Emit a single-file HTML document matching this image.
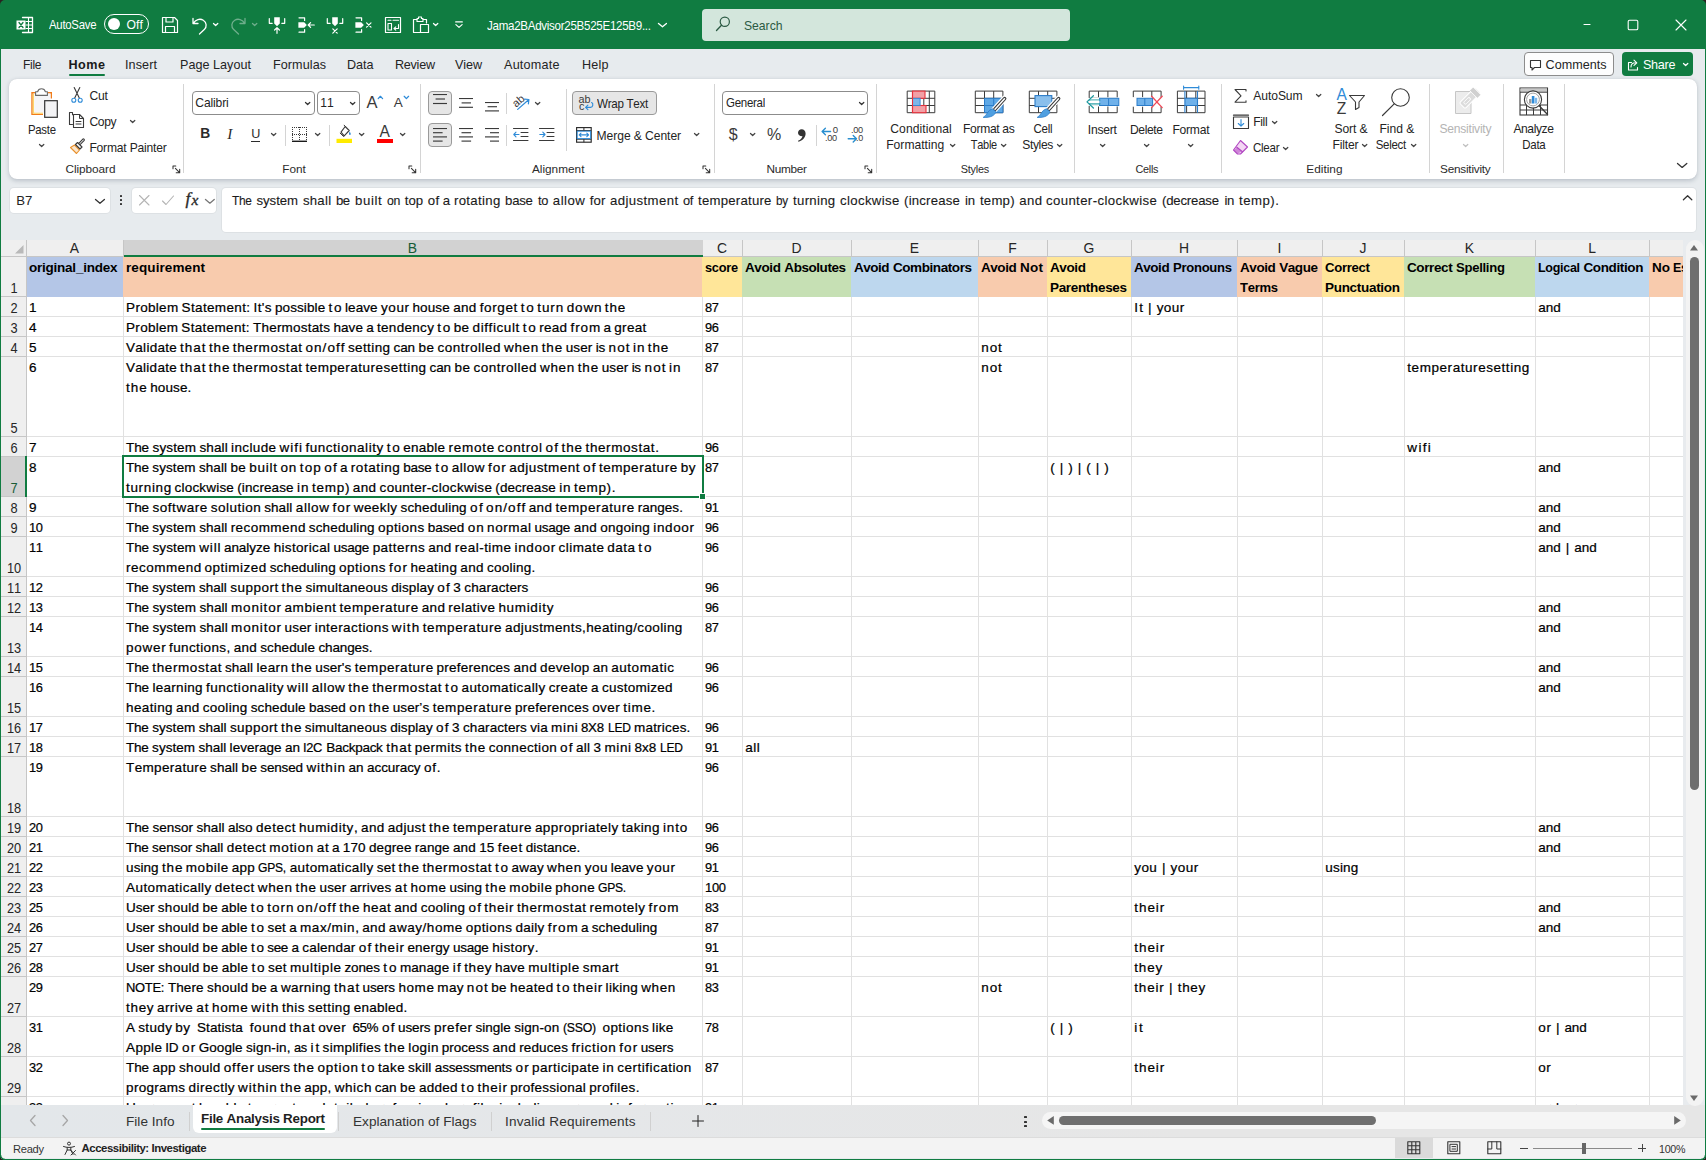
<!DOCTYPE html>
<html><head><meta charset="utf-8"><title>Excel</title><style>
html,body{margin:0;padding:0;}
body{width:1706px;height:1160px;position:relative;overflow:hidden;background:#e7ebee;font-family:"Liberation Sans",sans-serif;font-kerning:none;}
div,svg{position:absolute;box-sizing:border-box;}
.t{white-space:pre;}
.w{position:absolute;top:0;}
</style></head><body>
<div style="left:1px;top:240px;width:1682px;height:865px;background:#ffffff;"></div>
<div style="left:1px;top:240px;width:1682px;height:17px;background:#efefef;"></div>
<div style="left:1px;top:256px;width:1682px;height:1px;background:#c6c6c6;"></div>
<div style="left:1px;top:257px;width:26px;height:848px;background:#efefef;"></div>
<div style="left:26px;top:240px;width:1px;height:865px;background:#c6c6c6;"></div>
<svg style="left:13px;top:243px;" width="12" height="12" viewBox="0 0 12 12"><path d="M10.5 2 L10.5 10.5 L2 10.5 Z" fill="#b9b9b9"/></svg>
<div style="left:27px;top:296px;width:1656px;height:1px;background:#e1e1e1;"></div>
<div style="left:1px;top:296px;width:25px;height:1px;background:#c6c6c6;"></div>
<div style="left:27px;top:316px;width:1656px;height:1px;background:#e1e1e1;"></div>
<div style="left:1px;top:316px;width:25px;height:1px;background:#c6c6c6;"></div>
<div style="left:27px;top:336px;width:1656px;height:1px;background:#e1e1e1;"></div>
<div style="left:1px;top:336px;width:25px;height:1px;background:#c6c6c6;"></div>
<div style="left:27px;top:356px;width:1656px;height:1px;background:#e1e1e1;"></div>
<div style="left:1px;top:356px;width:25px;height:1px;background:#c6c6c6;"></div>
<div style="left:27px;top:436px;width:1656px;height:1px;background:#e1e1e1;"></div>
<div style="left:1px;top:436px;width:25px;height:1px;background:#c6c6c6;"></div>
<div style="left:27px;top:456px;width:1656px;height:1px;background:#e1e1e1;"></div>
<div style="left:1px;top:456px;width:25px;height:1px;background:#c6c6c6;"></div>
<div style="left:27px;top:496px;width:1656px;height:1px;background:#e1e1e1;"></div>
<div style="left:1px;top:496px;width:25px;height:1px;background:#c6c6c6;"></div>
<div style="left:27px;top:516px;width:1656px;height:1px;background:#e1e1e1;"></div>
<div style="left:1px;top:516px;width:25px;height:1px;background:#c6c6c6;"></div>
<div style="left:27px;top:536px;width:1656px;height:1px;background:#e1e1e1;"></div>
<div style="left:1px;top:536px;width:25px;height:1px;background:#c6c6c6;"></div>
<div style="left:27px;top:576px;width:1656px;height:1px;background:#e1e1e1;"></div>
<div style="left:1px;top:576px;width:25px;height:1px;background:#c6c6c6;"></div>
<div style="left:27px;top:596px;width:1656px;height:1px;background:#e1e1e1;"></div>
<div style="left:1px;top:596px;width:25px;height:1px;background:#c6c6c6;"></div>
<div style="left:27px;top:616px;width:1656px;height:1px;background:#e1e1e1;"></div>
<div style="left:1px;top:616px;width:25px;height:1px;background:#c6c6c6;"></div>
<div style="left:27px;top:656px;width:1656px;height:1px;background:#e1e1e1;"></div>
<div style="left:1px;top:656px;width:25px;height:1px;background:#c6c6c6;"></div>
<div style="left:27px;top:676px;width:1656px;height:1px;background:#e1e1e1;"></div>
<div style="left:1px;top:676px;width:25px;height:1px;background:#c6c6c6;"></div>
<div style="left:27px;top:716px;width:1656px;height:1px;background:#e1e1e1;"></div>
<div style="left:1px;top:716px;width:25px;height:1px;background:#c6c6c6;"></div>
<div style="left:27px;top:736px;width:1656px;height:1px;background:#e1e1e1;"></div>
<div style="left:1px;top:736px;width:25px;height:1px;background:#c6c6c6;"></div>
<div style="left:27px;top:756px;width:1656px;height:1px;background:#e1e1e1;"></div>
<div style="left:1px;top:756px;width:25px;height:1px;background:#c6c6c6;"></div>
<div style="left:27px;top:816px;width:1656px;height:1px;background:#e1e1e1;"></div>
<div style="left:1px;top:816px;width:25px;height:1px;background:#c6c6c6;"></div>
<div style="left:27px;top:836px;width:1656px;height:1px;background:#e1e1e1;"></div>
<div style="left:1px;top:836px;width:25px;height:1px;background:#c6c6c6;"></div>
<div style="left:27px;top:856px;width:1656px;height:1px;background:#e1e1e1;"></div>
<div style="left:1px;top:856px;width:25px;height:1px;background:#c6c6c6;"></div>
<div style="left:27px;top:876px;width:1656px;height:1px;background:#e1e1e1;"></div>
<div style="left:1px;top:876px;width:25px;height:1px;background:#c6c6c6;"></div>
<div style="left:27px;top:896px;width:1656px;height:1px;background:#e1e1e1;"></div>
<div style="left:1px;top:896px;width:25px;height:1px;background:#c6c6c6;"></div>
<div style="left:27px;top:916px;width:1656px;height:1px;background:#e1e1e1;"></div>
<div style="left:1px;top:916px;width:25px;height:1px;background:#c6c6c6;"></div>
<div style="left:27px;top:936px;width:1656px;height:1px;background:#e1e1e1;"></div>
<div style="left:1px;top:936px;width:25px;height:1px;background:#c6c6c6;"></div>
<div style="left:27px;top:956px;width:1656px;height:1px;background:#e1e1e1;"></div>
<div style="left:1px;top:956px;width:25px;height:1px;background:#c6c6c6;"></div>
<div style="left:27px;top:976px;width:1656px;height:1px;background:#e1e1e1;"></div>
<div style="left:1px;top:976px;width:25px;height:1px;background:#c6c6c6;"></div>
<div style="left:27px;top:1016px;width:1656px;height:1px;background:#e1e1e1;"></div>
<div style="left:1px;top:1016px;width:25px;height:1px;background:#c6c6c6;"></div>
<div style="left:27px;top:1056px;width:1656px;height:1px;background:#e1e1e1;"></div>
<div style="left:1px;top:1056px;width:25px;height:1px;background:#c6c6c6;"></div>
<div style="left:27px;top:1096px;width:1656px;height:1px;background:#e1e1e1;"></div>
<div style="left:1px;top:1096px;width:25px;height:1px;background:#c6c6c6;"></div>
<div style="left:123px;top:257px;width:1px;height:848px;background:#e1e1e1;"></div>
<div style="left:123px;top:240px;width:1px;height:16px;background:#c6c6c6;"></div>
<div style="left:702px;top:257px;width:1px;height:848px;background:#e1e1e1;"></div>
<div style="left:702px;top:240px;width:1px;height:16px;background:#c6c6c6;"></div>
<div style="left:742px;top:257px;width:1px;height:848px;background:#e1e1e1;"></div>
<div style="left:742px;top:240px;width:1px;height:16px;background:#c6c6c6;"></div>
<div style="left:851px;top:257px;width:1px;height:848px;background:#e1e1e1;"></div>
<div style="left:851px;top:240px;width:1px;height:16px;background:#c6c6c6;"></div>
<div style="left:978px;top:257px;width:1px;height:848px;background:#e1e1e1;"></div>
<div style="left:978px;top:240px;width:1px;height:16px;background:#c6c6c6;"></div>
<div style="left:1047px;top:257px;width:1px;height:848px;background:#e1e1e1;"></div>
<div style="left:1047px;top:240px;width:1px;height:16px;background:#c6c6c6;"></div>
<div style="left:1131px;top:257px;width:1px;height:848px;background:#e1e1e1;"></div>
<div style="left:1131px;top:240px;width:1px;height:16px;background:#c6c6c6;"></div>
<div style="left:1237px;top:257px;width:1px;height:848px;background:#e1e1e1;"></div>
<div style="left:1237px;top:240px;width:1px;height:16px;background:#c6c6c6;"></div>
<div style="left:1322px;top:257px;width:1px;height:848px;background:#e1e1e1;"></div>
<div style="left:1322px;top:240px;width:1px;height:16px;background:#c6c6c6;"></div>
<div style="left:1404px;top:257px;width:1px;height:848px;background:#e1e1e1;"></div>
<div style="left:1404px;top:240px;width:1px;height:16px;background:#c6c6c6;"></div>
<div style="left:1535px;top:257px;width:1px;height:848px;background:#e1e1e1;"></div>
<div style="left:1535px;top:240px;width:1px;height:16px;background:#c6c6c6;"></div>
<div style="left:1649px;top:257px;width:1px;height:848px;background:#e1e1e1;"></div>
<div style="left:1649px;top:240px;width:1px;height:16px;background:#c6c6c6;"></div>
<div style="left:124px;top:240px;width:579px;height:15px;background:#d2d2d2;"></div>
<div style="left:124px;top:255px;width:579px;height:2px;background:#107c41;"></div>
<div style="left:1px;top:457px;width:24px;height:39px;background:#d2d2d2;"></div>
<div style="left:25px;top:456px;width:2px;height:41px;background:#107c41;"></div>
<div class="t" style="top:239.08px;font-size:13.9px;line-height:18px;height:18px;color:#262626;left:-225.5px;width:600px;text-align:center;"><span id="t0">A</span></div>
<div class="t" style="top:239.08px;font-size:13.9px;line-height:18px;height:18px;color:#185c37;left:112.5px;width:600px;text-align:center;"><span id="t1">B</span></div>
<div class="t" style="top:239.08px;font-size:13.9px;line-height:18px;height:18px;color:#262626;left:422.0px;width:600px;text-align:center;"><span id="t2">C</span></div>
<div class="t" style="top:239.08px;font-size:13.9px;line-height:18px;height:18px;color:#262626;left:496.5px;width:600px;text-align:center;"><span id="t3">D</span></div>
<div class="t" style="top:239.08px;font-size:13.9px;line-height:18px;height:18px;color:#262626;left:614.5px;width:600px;text-align:center;"><span id="t4">E</span></div>
<div class="t" style="top:239.08px;font-size:13.9px;line-height:18px;height:18px;color:#262626;left:712.5px;width:600px;text-align:center;"><span id="t5">F</span></div>
<div class="t" style="top:239.08px;font-size:13.9px;line-height:18px;height:18px;color:#262626;left:789.0px;width:600px;text-align:center;"><span id="t6">G</span></div>
<div class="t" style="top:239.08px;font-size:13.9px;line-height:18px;height:18px;color:#262626;left:884.0px;width:600px;text-align:center;"><span id="t7">H</span></div>
<div class="t" style="top:239.08px;font-size:13.9px;line-height:18px;height:18px;color:#262626;left:979.5px;width:600px;text-align:center;"><span id="t8">I</span></div>
<div class="t" style="top:239.08px;font-size:13.9px;line-height:18px;height:18px;color:#262626;left:1063.0px;width:600px;text-align:center;"><span id="t9">J</span></div>
<div class="t" style="top:239.08px;font-size:13.9px;line-height:18px;height:18px;color:#262626;left:1169.5px;width:600px;text-align:center;"><span id="t10">K</span></div>
<div class="t" style="top:239.08px;font-size:13.9px;line-height:18px;height:18px;color:#262626;left:1292.0px;width:600px;text-align:center;"><span id="t11">L</span></div>
<div class="t" style="top:278.88px;font-size:14.2px;line-height:18px;height:18px;color:#262626;left:-286.5px;width:600px;text-align:center;transform:scaleX(0.9);"><span id="t12">1</span></div>
<div class="t" style="top:298.88px;font-size:14.2px;line-height:18px;height:18px;color:#262626;left:-286.5px;width:600px;text-align:center;transform:scaleX(0.9);"><span id="t13">2</span></div>
<div class="t" style="top:318.88px;font-size:14.2px;line-height:18px;height:18px;color:#262626;left:-286.5px;width:600px;text-align:center;transform:scaleX(0.9);"><span id="t14">3</span></div>
<div class="t" style="top:338.88px;font-size:14.2px;line-height:18px;height:18px;color:#262626;left:-286.5px;width:600px;text-align:center;transform:scaleX(0.9);"><span id="t15">4</span></div>
<div class="t" style="top:418.88px;font-size:14.2px;line-height:18px;height:18px;color:#262626;left:-286.5px;width:600px;text-align:center;transform:scaleX(0.9);"><span id="t16">5</span></div>
<div class="t" style="top:438.88px;font-size:14.2px;line-height:18px;height:18px;color:#262626;left:-286.5px;width:600px;text-align:center;transform:scaleX(0.9);"><span id="t17">6</span></div>
<div class="t" style="top:478.88px;font-size:14.2px;line-height:18px;height:18px;color:#185c37;left:-286.5px;width:600px;text-align:center;transform:scaleX(0.9);"><span id="t18">7</span></div>
<div class="t" style="top:498.88px;font-size:14.2px;line-height:18px;height:18px;color:#262626;left:-286.5px;width:600px;text-align:center;transform:scaleX(0.9);"><span id="t19">8</span></div>
<div class="t" style="top:518.88px;font-size:14.2px;line-height:18px;height:18px;color:#262626;left:-286.5px;width:600px;text-align:center;transform:scaleX(0.9);"><span id="t20">9</span></div>
<div class="t" style="top:558.88px;font-size:14.2px;line-height:18px;height:18px;color:#262626;left:-286.5px;width:600px;text-align:center;transform:scaleX(0.9);"><span id="t21">10</span></div>
<div class="t" style="top:578.88px;font-size:14.2px;line-height:18px;height:18px;color:#262626;left:-286.5px;width:600px;text-align:center;transform:scaleX(0.9);"><span id="t22">11</span></div>
<div class="t" style="top:598.88px;font-size:14.2px;line-height:18px;height:18px;color:#262626;left:-286.5px;width:600px;text-align:center;transform:scaleX(0.9);"><span id="t23">12</span></div>
<div class="t" style="top:638.88px;font-size:14.2px;line-height:18px;height:18px;color:#262626;left:-286.5px;width:600px;text-align:center;transform:scaleX(0.9);"><span id="t24">13</span></div>
<div class="t" style="top:658.88px;font-size:14.2px;line-height:18px;height:18px;color:#262626;left:-286.5px;width:600px;text-align:center;transform:scaleX(0.9);"><span id="t25">14</span></div>
<div class="t" style="top:698.88px;font-size:14.2px;line-height:18px;height:18px;color:#262626;left:-286.5px;width:600px;text-align:center;transform:scaleX(0.9);"><span id="t26">15</span></div>
<div class="t" style="top:718.88px;font-size:14.2px;line-height:18px;height:18px;color:#262626;left:-286.5px;width:600px;text-align:center;transform:scaleX(0.9);"><span id="t27">16</span></div>
<div class="t" style="top:738.88px;font-size:14.2px;line-height:18px;height:18px;color:#262626;left:-286.5px;width:600px;text-align:center;transform:scaleX(0.9);"><span id="t28">17</span></div>
<div class="t" style="top:798.88px;font-size:14.2px;line-height:18px;height:18px;color:#262626;left:-286.5px;width:600px;text-align:center;transform:scaleX(0.9);"><span id="t29">18</span></div>
<div class="t" style="top:818.88px;font-size:14.2px;line-height:18px;height:18px;color:#262626;left:-286.5px;width:600px;text-align:center;transform:scaleX(0.9);"><span id="t30">19</span></div>
<div class="t" style="top:838.88px;font-size:14.2px;line-height:18px;height:18px;color:#262626;left:-286.5px;width:600px;text-align:center;transform:scaleX(0.9);"><span id="t31">20</span></div>
<div class="t" style="top:858.88px;font-size:14.2px;line-height:18px;height:18px;color:#262626;left:-286.5px;width:600px;text-align:center;transform:scaleX(0.9);"><span id="t32">21</span></div>
<div class="t" style="top:878.88px;font-size:14.2px;line-height:18px;height:18px;color:#262626;left:-286.5px;width:600px;text-align:center;transform:scaleX(0.9);"><span id="t33">22</span></div>
<div class="t" style="top:898.88px;font-size:14.2px;line-height:18px;height:18px;color:#262626;left:-286.5px;width:600px;text-align:center;transform:scaleX(0.9);"><span id="t34">23</span></div>
<div class="t" style="top:918.88px;font-size:14.2px;line-height:18px;height:18px;color:#262626;left:-286.5px;width:600px;text-align:center;transform:scaleX(0.9);"><span id="t35">24</span></div>
<div class="t" style="top:938.88px;font-size:14.2px;line-height:18px;height:18px;color:#262626;left:-286.5px;width:600px;text-align:center;transform:scaleX(0.9);"><span id="t36">25</span></div>
<div class="t" style="top:958.88px;font-size:14.2px;line-height:18px;height:18px;color:#262626;left:-286.5px;width:600px;text-align:center;transform:scaleX(0.9);"><span id="t37">26</span></div>
<div class="t" style="top:998.88px;font-size:14.2px;line-height:18px;height:18px;color:#262626;left:-286.5px;width:600px;text-align:center;transform:scaleX(0.9);"><span id="t38">27</span></div>
<div class="t" style="top:1038.88px;font-size:14.2px;line-height:18px;height:18px;color:#262626;left:-286.5px;width:600px;text-align:center;transform:scaleX(0.9);"><span id="t39">28</span></div>
<div class="t" style="top:1078.88px;font-size:14.2px;line-height:18px;height:18px;color:#262626;left:-286.5px;width:600px;text-align:center;transform:scaleX(0.9);"><span id="t40">29</span></div>
<div style="left:27px;top:257px;width:96px;height:40px;background:#b4c6e7;"></div>
<div style="left:123px;top:257px;width:579px;height:40px;background:#f8cbad;"></div>
<div style="left:702px;top:257px;width:40px;height:40px;background:#ffe699;"></div>
<div style="left:742px;top:257px;width:109px;height:40px;background:#c6e0b4;"></div>
<div style="left:851px;top:257px;width:127px;height:40px;background:#bdd7ee;"></div>
<div style="left:978px;top:257px;width:69px;height:40px;background:#f8cbad;"></div>
<div style="left:1047px;top:257px;width:84px;height:40px;background:#ffe699;"></div>
<div style="left:1131px;top:257px;width:106px;height:40px;background:#b4c6e7;"></div>
<div style="left:1237px;top:257px;width:85px;height:40px;background:#f8cbad;"></div>
<div style="left:1322px;top:257px;width:82px;height:40px;background:#ffe699;"></div>
<div style="left:1404px;top:257px;width:131px;height:40px;background:#c6e0b4;"></div>
<div style="left:1535px;top:257px;width:114px;height:40px;background:#bdd7ee;"></div>
<div style="left:1649px;top:257px;width:34px;height:40px;background:#f8cbad;"></div>
<div class="t" style="left:29.0px;top:258.52px;font-size:13.5px;line-height:18px;height:18px;color:#000;font-weight:700;"><span class="w" id="w41" style="left:0.00px;letter-spacing:-0.233px;">original_index</span></div>
<div class="t" style="left:126.0px;top:258.52px;font-size:13.5px;line-height:18px;height:18px;color:#000;font-weight:700;"><span class="w" id="w42" style="left:0.00px;letter-spacing:0.097px;">requirement</span></div>
<div class="t" style="left:705.0px;top:258.52px;font-size:13.5px;line-height:18px;height:18px;color:#000;font-weight:700;"><span class="w" id="w43" style="left:0.00px;letter-spacing:-0.300px;transform:scaleX(0.9474);transform-origin:0 50%;">score</span></div>
<div class="t" style="left:745.0px;top:258.52px;font-size:13.5px;line-height:18px;height:18px;color:#000;font-weight:700;"><span class="w" id="w44" style="left:0.00px;letter-spacing:-0.386px;">Avoid</span><span class="w" id="w45" style="left:39.36px;letter-spacing:-0.454px;">Absolutes</span></div>
<div class="t" style="left:854.0px;top:258.52px;font-size:13.5px;line-height:18px;height:18px;color:#000;font-weight:700;"><span class="w" id="w46" style="left:0.00px;letter-spacing:-0.485px;">Avoid</span><span class="w" id="w47" style="left:38.93px;letter-spacing:-0.420px;">Combinators</span></div>
<div class="t" style="left:981.0px;top:258.52px;font-size:13.5px;line-height:18px;height:18px;color:#000;font-weight:700;"><span class="w" id="w48" style="left:0.00px;letter-spacing:-0.458px;">Avoid</span><span class="w" id="w49" style="left:39.05px;letter-spacing:0.226px;">Not</span></div>
<div class="t" style="left:1050.0px;top:258.52px;font-size:13.5px;line-height:18px;height:18px;color:#000;font-weight:700;"><span class="w" id="w50" style="left:0.00px;letter-spacing:-0.379px;">Avoid</span></div>
<div class="t" style="left:1050.0px;top:278.52px;font-size:13.5px;line-height:18px;height:18px;color:#000;font-weight:700;"><span class="w" id="w51" style="left:0.00px;letter-spacing:-0.330px;">Parentheses</span></div>
<div class="t" style="left:1134.0px;top:258.52px;font-size:13.5px;line-height:18px;height:18px;color:#000;font-weight:700;"><span class="w" id="w52" style="left:0.00px;letter-spacing:-0.469px;">Avoid</span><span class="w" id="w53" style="left:39.00px;letter-spacing:-0.300px;transform:scaleX(0.9689);transform-origin:0 50%;">Pronouns</span></div>
<div class="t" style="left:1240.0px;top:258.52px;font-size:13.5px;line-height:18px;height:18px;color:#000;font-weight:700;"><span class="w" id="w54" style="left:0.00px;letter-spacing:-0.424px;">Avoid</span><span class="w" id="w55" style="left:39.19px;letter-spacing:-0.427px;">Vague</span></div>
<div class="t" style="left:1240.0px;top:278.52px;font-size:13.5px;line-height:18px;height:18px;color:#000;font-weight:700;"><span class="w" id="w56" style="left:0.00px;letter-spacing:-0.300px;transform:scaleX(0.9662);transform-origin:0 50%;">Terms</span></div>
<div class="t" style="left:1325.0px;top:258.52px;font-size:13.5px;line-height:18px;height:18px;color:#000;font-weight:700;"><span class="w" id="w57" style="left:0.00px;letter-spacing:-0.300px;transform:scaleX(0.9737);transform-origin:0 50%;">Correct</span></div>
<div class="t" style="left:1325.0px;top:278.52px;font-size:13.5px;line-height:18px;height:18px;color:#000;font-weight:700;"><span class="w" id="w58" style="left:0.00px;letter-spacing:-0.300px;">Punctuation</span></div>
<div class="t" style="left:1407.0px;top:258.52px;font-size:13.5px;line-height:18px;height:18px;color:#000;font-weight:700;"><span class="w" id="w59" style="left:0.00px;letter-spacing:-0.386px;">Correct</span><span class="w" id="w60" style="left:49.09px;letter-spacing:-0.300px;transform:scaleX(0.9701);transform-origin:0 50%;">Spelling</span></div>
<div class="t" style="left:1538.0px;top:258.52px;font-size:13.5px;line-height:18px;height:18px;color:#000;font-weight:700;"><span class="w" id="w61" style="left:0.00px;letter-spacing:-0.300px;transform:scaleX(0.9254);transform-origin:0 50%;">Logical</span><span class="w" id="w62" style="left:45.42px;letter-spacing:-0.364px;">Condition</span></div>
<div style="left:1650px;top:257px;width:34px;height:40px;overflow:hidden;">
<div class="t" style="left:2.0px;top:1.52px;font-size:13.5px;line-height:18px;height:18px;color:#000;font-weight:700;"><span class="w" id="w63" style="left:0.00px;letter-spacing:-0.031px;">No</span><span class="w" id="w64" style="left:21.37px;letter-spacing:-0.300px;transform:scaleX(0.9177);transform-origin:0 50%;">Escapes</span></div>
</div>
<div style="left:0;top:240px;width:1683px;height:865px;overflow:hidden;"><div style="left:0;top:-240px;width:1683px;height:1160px;">
<div class="t" style="left:29.3px;top:298.62px;font-size:13.5px;line-height:18px;height:18px;color:#000;-webkit-text-stroke:0.22px #000;"><span class="w" id="w65" style="left:-0.26px;letter-spacing:0.000px;">1</span></div>
<div class="t" style="left:705.3px;top:298.62px;font-size:13.5px;line-height:18px;height:18px;color:#000;-webkit-text-stroke:0.22px #000;"><span class="w" id="w66" style="left:0.00px;letter-spacing:-0.300px;transform:scaleX(0.9504);transform-origin:0 50%;">87</span></div>
<div class="t" style="left:126.1px;top:298.62px;font-size:13.5px;line-height:18px;height:18px;color:#000;-webkit-text-stroke:0.22px #000;"><span class="w" id="w67" style="left:0.00px;letter-spacing:0.297px;">Problem</span><span class="w" id="w68" style="left:55.48px;letter-spacing:0.354px;">Statement:</span><span class="w" id="w69" style="left:127.38px;letter-spacing:0.426px;">It's</span><span class="w" id="w70" style="left:148.92px;letter-spacing:0.087px;">possible</span><span class="w" id="w71" style="left:202.48px;letter-spacing:1.770px;">to</span><span class="w" id="w72" style="left:218.93px;letter-spacing:0.075px;">leave</span><span class="w" id="w73" style="left:254.93px;letter-spacing:0.587px;">your</span><span class="w" id="w74" style="left:286.38px;letter-spacing:0.123px;">house</span><span class="w" id="w75" style="left:327.08px;letter-spacing:0.297px;">and</span><span class="w" id="w76" style="left:353.63px;letter-spacing:0.605px;">forget</span><span class="w" id="w77" style="left:394.60px;letter-spacing:1.770px;">to</span><span class="w" id="w78" style="left:411.06px;letter-spacing:0.984px;">turn</span><span class="w" id="w79" style="left:440.69px;letter-spacing:0.794px;">down</span><span class="w" id="w80" style="left:478.77px;letter-spacing:0.873px;">the</span></div>
<div class="t" style="left:1134.3px;top:298.62px;font-size:13.5px;line-height:18px;height:18px;color:#000;-webkit-text-stroke:0.22px #000;"><span class="w" id="w81" style="left:0.00px;letter-spacing:1.235px;">It</span><span class="w" id="w82" style="left:13.80px;letter-spacing:0.000px;">|</span><span class="w" id="w83" style="left:22.36px;letter-spacing:0.459px;">your</span></div>
<div class="t" style="left:1538.3px;top:298.62px;font-size:13.5px;line-height:18px;height:18px;color:#000;-webkit-text-stroke:0.22px #000;"><span class="w" id="w84" style="left:0.00px;letter-spacing:-0.016px;">and</span></div>
<div class="t" style="left:29.3px;top:318.62px;font-size:13.5px;line-height:18px;height:18px;color:#000;-webkit-text-stroke:0.22px #000;"><span class="w" id="w85" style="left:-0.26px;letter-spacing:0.000px;">4</span></div>
<div class="t" style="left:705.3px;top:318.62px;font-size:13.5px;line-height:18px;height:18px;color:#000;-webkit-text-stroke:0.22px #000;"><span class="w" id="w86" style="left:0.00px;letter-spacing:-0.300px;transform:scaleX(0.9504);transform-origin:0 50%;">96</span></div>
<div class="t" style="left:126.1px;top:318.62px;font-size:13.5px;line-height:18px;height:18px;color:#000;-webkit-text-stroke:0.22px #000;"><span class="w" id="w87" style="left:0.00px;letter-spacing:0.266px;">Problem</span><span class="w" id="w88" style="left:55.28px;letter-spacing:0.328px;">Statement:</span><span class="w" id="w89" style="left:126.93px;letter-spacing:0.204px;">Thermostats</span><span class="w" id="w90" style="left:207.41px;letter-spacing:0.049px;">have</span><span class="w" id="w91" style="left:240.10px;letter-spacing:0.000px;">a</span><span class="w" id="w92" style="left:250.87px;letter-spacing:0.310px;">tendency</span><span class="w" id="w93" style="left:311.24px;letter-spacing:1.724px;">to</span><span class="w" id="w94" style="left:327.64px;letter-spacing:0.379px;">be</span><span class="w" id="w95" style="left:346.45px;letter-spacing:0.597px;">difficult</span><span class="w" id="w96" style="left:396.67px;letter-spacing:1.724px;">to</span><span class="w" id="w97" style="left:413.06px;letter-spacing:0.282px;">read</span><span class="w" id="w98" style="left:444.35px;letter-spacing:0.942px;">from</span><span class="w" id="w99" style="left:477.43px;letter-spacing:0.000px;">a</span><span class="w" id="w100" style="left:488.20px;letter-spacing:0.330px;">great</span></div>
<div class="t" style="left:29.3px;top:338.62px;font-size:13.5px;line-height:18px;height:18px;color:#000;-webkit-text-stroke:0.22px #000;"><span class="w" id="w101" style="left:-0.26px;letter-spacing:0.000px;">5</span></div>
<div class="t" style="left:705.3px;top:338.62px;font-size:13.5px;line-height:18px;height:18px;color:#000;-webkit-text-stroke:0.22px #000;"><span class="w" id="w102" style="left:0.00px;letter-spacing:-0.300px;transform:scaleX(0.9504);transform-origin:0 50%;">87</span></div>
<div class="t" style="left:126.1px;top:338.62px;font-size:13.5px;line-height:18px;height:18px;color:#000;-webkit-text-stroke:0.22px #000;"><span class="w" id="w103" style="left:0.00px;letter-spacing:0.257px;">Validate</span><span class="w" id="w104" style="left:54.02px;letter-spacing:0.938px;">that</span><span class="w" id="w105" style="left:82.79px;letter-spacing:0.888px;">the</span><span class="w" id="w106" style="left:106.77px;letter-spacing:0.605px;">thermostat</span><span class="w" id="w107" style="left:179.41px;letter-spacing:1.045px;">on/off</span><span class="w" id="w108" style="left:221.84px;letter-spacing:0.394px;">setting</span><span class="w" id="w109" style="left:267.41px;letter-spacing:-0.087px;">can</span><span class="w" id="w110" style="left:292.44px;letter-spacing:0.455px;">be</span><span class="w" id="w111" style="left:311.35px;letter-spacing:0.506px;">controlled</span><span class="w" id="w112" style="left:377.88px;letter-spacing:0.660px;">when</span><span class="w" id="w113" style="left:415.56px;letter-spacing:0.888px;">the</span><span class="w" id="w114" style="left:439.54px;letter-spacing:0.140px;">user</span><span class="w" id="w115" style="left:469.65px;letter-spacing:-0.355px;">is</span><span class="w" id="w116" style="left:482.46px;letter-spacing:1.113px;">not</span><span class="w" id="w117" style="left:506.89px;letter-spacing:0.912px;">in</span><span class="w" id="w118" style="left:521.74px;letter-spacing:0.888px;">the</span></div>
<div class="t" style="left:981.3px;top:338.62px;font-size:13.5px;line-height:18px;height:18px;color:#000;-webkit-text-stroke:0.22px #000;"><span class="w" id="w119" style="left:0.00px;letter-spacing:0.859px;">not</span></div>
<div class="t" style="left:29.3px;top:358.62px;font-size:13.5px;line-height:18px;height:18px;color:#000;-webkit-text-stroke:0.22px #000;"><span class="w" id="w120" style="left:-0.26px;letter-spacing:0.000px;">6</span></div>
<div class="t" style="left:705.3px;top:358.62px;font-size:13.5px;line-height:18px;height:18px;color:#000;-webkit-text-stroke:0.22px #000;"><span class="w" id="w121" style="left:0.00px;letter-spacing:-0.300px;transform:scaleX(0.9504);transform-origin:0 50%;">87</span></div>
<div class="t" style="left:126.1px;top:358.62px;font-size:13.5px;line-height:18px;height:18px;color:#000;-webkit-text-stroke:0.22px #000;"><span class="w" id="w122" style="left:0.00px;letter-spacing:0.255px;">Validate</span><span class="w" id="w123" style="left:54.01px;letter-spacing:0.936px;">that</span><span class="w" id="w124" style="left:82.77px;letter-spacing:0.885px;">the</span><span class="w" id="w125" style="left:106.74px;letter-spacing:0.603px;">thermostat</span><span class="w" id="w126" style="left:179.37px;letter-spacing:0.477px;">temperaturesetting</span><span class="w" id="w127" style="left:303.45px;letter-spacing:-0.090px;">can</span><span class="w" id="w128" style="left:328.48px;letter-spacing:0.451px;">be</span><span class="w" id="w129" style="left:347.38px;letter-spacing:0.505px;">controlled</span><span class="w" id="w130" style="left:413.89px;letter-spacing:0.657px;">when</span><span class="w" id="w131" style="left:451.56px;letter-spacing:0.885px;">the</span><span class="w" id="w132" style="left:475.54px;letter-spacing:0.137px;">user</span><span class="w" id="w133" style="left:505.64px;letter-spacing:-0.357px;">is</span><span class="w" id="w134" style="left:518.45px;letter-spacing:1.111px;">not</span><span class="w" id="w135" style="left:542.88px;letter-spacing:0.909px;">in</span></div>
<div class="t" style="left:126.1px;top:378.62px;font-size:13.5px;line-height:18px;height:18px;color:#000;-webkit-text-stroke:0.22px #000;"><span class="w" id="w136" style="left:0.00px;letter-spacing:0.912px;">the</span><span class="w" id="w137" style="left:24.04px;letter-spacing:0.143px;">house.</span></div>
<div class="t" style="left:981.3px;top:358.62px;font-size:13.5px;line-height:18px;height:18px;color:#000;-webkit-text-stroke:0.22px #000;"><span class="w" id="w138" style="left:0.00px;letter-spacing:0.859px;">not</span></div>
<div class="t" style="left:1407.3px;top:358.62px;font-size:13.5px;line-height:18px;height:18px;color:#000;-webkit-text-stroke:0.22px #000;"><span class="w" id="w139" style="left:0.00px;letter-spacing:0.555px;">temperaturesetting</span></div>
<div class="t" style="left:29.3px;top:438.62px;font-size:13.5px;line-height:18px;height:18px;color:#000;-webkit-text-stroke:0.22px #000;"><span class="w" id="w140" style="left:-0.26px;letter-spacing:0.000px;">7</span></div>
<div class="t" style="left:705.3px;top:438.62px;font-size:13.5px;line-height:18px;height:18px;color:#000;-webkit-text-stroke:0.22px #000;"><span class="w" id="w141" style="left:0.00px;letter-spacing:-0.300px;transform:scaleX(0.9504);transform-origin:0 50%;">96</span></div>
<div class="t" style="left:126.1px;top:438.62px;font-size:13.5px;line-height:18px;height:18px;color:#000;-webkit-text-stroke:0.22px #000;"><span class="w" id="w142" style="left:0.00px;letter-spacing:-0.155px;">The</span><span class="w" id="w143" style="left:26.39px;letter-spacing:0.160px;">system</span><span class="w" id="w144" style="left:73.39px;letter-spacing:0.106px;">shall</span><span class="w" id="w145" style="left:105.02px;letter-spacing:0.357px;">include</span><span class="w" id="w146" style="left:153.38px;letter-spacing:0.993px;">wifi</span><span class="w" id="w147" style="left:179.29px;letter-spacing:0.546px;">functionality</span><span class="w" id="w148" style="left:260.58px;letter-spacing:1.841px;">to</span><span class="w" id="w149" style="left:277.12px;letter-spacing:0.264px;">enable</span><span class="w" id="w150" style="left:322.42px;letter-spacing:0.728px;">remote</span><span class="w" id="w151" style="left:371.53px;letter-spacing:0.632px;">control</span><span class="w" id="w152" style="left:419.29px;letter-spacing:1.388px;">of</span><span class="w" id="w153" style="left:435.38px;letter-spacing:0.929px;">the</span><span class="w" id="w154" style="left:459.46px;letter-spacing:0.581px;">thermostat.</span></div>
<div class="t" style="left:1407.3px;top:438.62px;font-size:13.5px;line-height:18px;height:18px;color:#000;-webkit-text-stroke:0.22px #000;"><span class="w" id="w155" style="left:0.00px;letter-spacing:1.333px;">wifi</span></div>
<div class="t" style="left:29.3px;top:458.62px;font-size:13.5px;line-height:18px;height:18px;color:#000;-webkit-text-stroke:0.22px #000;"><span class="w" id="w156" style="left:-0.26px;letter-spacing:0.000px;">8</span></div>
<div class="t" style="left:705.3px;top:458.62px;font-size:13.5px;line-height:18px;height:18px;color:#000;-webkit-text-stroke:0.22px #000;"><span class="w" id="w157" style="left:0.00px;letter-spacing:-0.300px;transform:scaleX(0.9504);transform-origin:0 50%;">87</span></div>
<div class="t" style="left:126.1px;top:458.62px;font-size:13.5px;line-height:18px;height:18px;color:#000;-webkit-text-stroke:0.22px #000;"><span class="w" id="w158" style="left:0.00px;letter-spacing:-0.233px;">The</span><span class="w" id="w159" style="left:26.21px;letter-spacing:0.101px;">system</span><span class="w" id="w160" style="left:72.89px;letter-spacing:0.057px;">shall</span><span class="w" id="w161" style="left:104.30px;letter-spacing:0.411px;">be</span><span class="w" id="w162" style="left:123.16px;letter-spacing:0.771px;">built</span><span class="w" id="w163" style="left:154.42px;letter-spacing:0.861px;">on</span><span class="w" id="w164" style="left:173.72px;letter-spacing:1.084px;">top</span><span class="w" id="w165" style="left:198.08px;letter-spacing:1.302px;">of</span><span class="w" id="w166" style="left:213.92px;letter-spacing:0.000px;">a</span><span class="w" id="w167" style="left:224.71px;letter-spacing:0.577px;">rotating</span><span class="w" id="w168" style="left:277.19px;letter-spacing:-0.234px;">base</span><span class="w" id="w169" style="left:309.18px;letter-spacing:1.752px;">to</span><span class="w" id="w170" style="left:325.61px;letter-spacing:0.537px;">allow</span><span class="w" id="w171" style="left:361.94px;letter-spacing:1.033px;">for</span><span class="w" id="w172" style="left:383.18px;letter-spacing:0.464px;">adjustment</span><span class="w" id="w173" style="left:456.82px;letter-spacing:1.302px;">of</span><span class="w" id="w174" style="left:472.80px;letter-spacing:0.553px;">temperature</span><span class="w" id="w175" style="left:554.54px;letter-spacing:0.499px;">by</span></div>
<div class="t" style="left:126.1px;top:478.62px;font-size:13.5px;line-height:18px;height:18px;color:#000;-webkit-text-stroke:0.22px #000;"><span class="w" id="w176" style="left:0.00px;letter-spacing:0.632px;">turning</span><span class="w" id="w177" style="left:48.52px;letter-spacing:0.184px;">clockwise</span><span class="w" id="w178" style="left:111.19px;letter-spacing:0.091px;">(increase</span><span class="w" id="w179" style="left:170.90px;letter-spacing:0.979px;">in</span><span class="w" id="w180" style="left:185.84px;letter-spacing:0.736px;">temp)</span><span class="w" id="w181" style="left:226.74px;letter-spacing:0.382px;">and</span><span class="w" id="w182" style="left:253.48px;letter-spacing:0.316px;">counter-clockwise</span><span class="w" id="w183" style="left:369.27px;letter-spacing:0.037px;">(decrease</span><span class="w" id="w184" style="left:433.06px;letter-spacing:0.979px;">in</span><span class="w" id="w185" style="left:448.00px;letter-spacing:0.607px;">temp).</span></div>
<div class="t" style="left:1050.3px;top:458.62px;font-size:13.5px;line-height:18px;height:18px;color:#000;-webkit-text-stroke:0.22px #000;"><span class="w" id="w186" style="left:-0.01px;letter-spacing:0.000px;">(</span><span class="w" id="w187" style="left:9.49px;letter-spacing:0.000px;">|</span><span class="w" id="w188" style="left:18.00px;letter-spacing:0.000px;">)</span><span class="w" id="w189" style="left:27.49px;letter-spacing:0.000px;">|</span><span class="w" id="w190" style="left:36.00px;letter-spacing:0.000px;">(</span><span class="w" id="w191" style="left:45.50px;letter-spacing:0.000px;">|</span><span class="w" id="w192" style="left:54.01px;letter-spacing:0.000px;">)</span></div>
<div class="t" style="left:1538.3px;top:458.62px;font-size:13.5px;line-height:18px;height:18px;color:#000;-webkit-text-stroke:0.22px #000;"><span class="w" id="w193" style="left:0.00px;letter-spacing:-0.016px;">and</span></div>
<div class="t" style="left:29.3px;top:498.62px;font-size:13.5px;line-height:18px;height:18px;color:#000;-webkit-text-stroke:0.22px #000;"><span class="w" id="w194" style="left:-0.26px;letter-spacing:0.000px;">9</span></div>
<div class="t" style="left:705.3px;top:498.62px;font-size:13.5px;line-height:18px;height:18px;color:#000;-webkit-text-stroke:0.22px #000;"><span class="w" id="w195" style="left:0.00px;letter-spacing:-0.300px;transform:scaleX(0.9504);transform-origin:0 50%;">91</span></div>
<div class="t" style="left:126.1px;top:498.62px;font-size:13.5px;line-height:18px;height:18px;color:#000;-webkit-text-stroke:0.22px #000;"><span class="w" id="w196" style="left:0.00px;letter-spacing:-0.148px;">The</span><span class="w" id="w197" style="left:26.41px;letter-spacing:0.529px;">software</span><span class="w" id="w198" style="left:84.58px;letter-spacing:0.500px;">solution</span><span class="w" id="w199" style="left:138.06px;letter-spacing:0.110px;">shall</span><span class="w" id="w200" style="left:169.71px;letter-spacing:0.598px;">allow</span><span class="w" id="w201" style="left:206.30px;letter-spacing:1.099px;">for</span><span class="w" id="w202" style="left:227.70px;letter-spacing:0.406px;">weekly</span><span class="w" id="w203" style="left:274.44px;letter-spacing:0.167px;">scheduling</span><span class="w" id="w204" style="left:343.93px;letter-spacing:1.396px;">of</span><span class="w" id="w205" style="left:360.03px;letter-spacing:1.081px;">on/off</span><span class="w" id="w206" style="left:402.65px;letter-spacing:0.368px;">and</span><span class="w" id="w207" style="left:429.36px;letter-spacing:0.611px;">temperature</span><span class="w" id="w208" style="left:511.71px;letter-spacing:0.010px;">ranges.</span></div>
<div class="t" style="left:1538.3px;top:498.62px;font-size:13.5px;line-height:18px;height:18px;color:#000;-webkit-text-stroke:0.22px #000;"><span class="w" id="w209" style="left:0.00px;letter-spacing:-0.016px;">and</span></div>
<div class="t" style="left:29.3px;top:518.62px;font-size:13.5px;line-height:18px;height:18px;color:#000;-webkit-text-stroke:0.22px #000;"><span class="w" id="w210" style="left:0.00px;letter-spacing:-0.300px;transform:scaleX(0.9504);transform-origin:0 50%;">10</span></div>
<div class="t" style="left:705.3px;top:518.62px;font-size:13.5px;line-height:18px;height:18px;color:#000;-webkit-text-stroke:0.22px #000;"><span class="w" id="w211" style="left:0.00px;letter-spacing:-0.300px;transform:scaleX(0.9504);transform-origin:0 50%;">96</span></div>
<div class="t" style="left:126.1px;top:518.62px;font-size:13.5px;line-height:18px;height:18px;color:#000;-webkit-text-stroke:0.22px #000;"><span class="w" id="w212" style="left:0.00px;letter-spacing:-0.206px;">The</span><span class="w" id="w213" style="left:26.27px;letter-spacing:0.121px;">system</span><span class="w" id="w214" style="left:73.07px;letter-spacing:0.074px;">shall</span><span class="w" id="w215" style="left:104.55px;letter-spacing:0.438px;">recommend</span><span class="w" id="w216" style="left:182.76px;letter-spacing:0.130px;">scheduling</span><span class="w" id="w217" style="left:251.89px;letter-spacing:0.462px;">options</span><span class="w" id="w218" style="left:301.63px;letter-spacing:-0.050px;">based</span><span class="w" id="w219" style="left:341.65px;letter-spacing:0.899px;">on</span><span class="w" id="w220" style="left:361.00px;letter-spacing:0.550px;">normal</span><span class="w" id="w221" style="left:408.44px;letter-spacing:-0.257px;">usage</span><span class="w" id="w222" style="left:447.62px;letter-spacing:0.309px;">and</span><span class="w" id="w223" style="left:474.19px;letter-spacing:0.253px;">ongoing</span><span class="w" id="w224" style="left:527.19px;letter-spacing:0.615px;">indoor</span></div>
<div class="t" style="left:1538.3px;top:518.62px;font-size:13.5px;line-height:18px;height:18px;color:#000;-webkit-text-stroke:0.22px #000;"><span class="w" id="w225" style="left:0.00px;letter-spacing:-0.016px;">and</span></div>
<div class="t" style="left:29.3px;top:538.62px;font-size:13.5px;line-height:18px;height:18px;color:#000;-webkit-text-stroke:0.22px #000;"><span class="w" id="w226" style="left:0.00px;letter-spacing:-0.300px;transform:scaleX(0.9504);transform-origin:0 50%;">11</span></div>
<div class="t" style="left:705.3px;top:538.62px;font-size:13.5px;line-height:18px;height:18px;color:#000;-webkit-text-stroke:0.22px #000;"><span class="w" id="w227" style="left:0.00px;letter-spacing:-0.300px;transform:scaleX(0.9504);transform-origin:0 50%;">96</span></div>
<div class="t" style="left:126.1px;top:538.62px;font-size:13.5px;line-height:18px;height:18px;color:#000;-webkit-text-stroke:0.22px #000;"><span class="w" id="w228" style="left:0.00px;letter-spacing:-0.194px;">The</span><span class="w" id="w229" style="left:26.30px;letter-spacing:0.130px;">system</span><span class="w" id="w230" style="left:73.15px;letter-spacing:0.836px;">will</span><span class="w" id="w231" style="left:97.83px;letter-spacing:-0.037px;">analyze</span><span class="w" id="w232" style="left:147.58px;letter-spacing:0.337px;">historical</span><span class="w" id="w233" style="left:207.32px;letter-spacing:-0.247px;">usage</span><span class="w" id="w234" style="left:246.55px;letter-spacing:0.469px;">patterns</span><span class="w" id="w235" style="left:302.04px;letter-spacing:0.321px;">and</span><span class="w" id="w236" style="left:328.64px;letter-spacing:0.483px;">real-time</span><span class="w" id="w237" style="left:388.44px;letter-spacing:0.624px;">indoor</span><span class="w" id="w238" style="left:432.52px;letter-spacing:0.427px;">climate</span><span class="w" id="w239" style="left:481.27px;letter-spacing:0.421px;">data</span><span class="w" id="w240" style="left:512.24px;letter-spacing:1.797px;">to</span></div>
<div class="t" style="left:126.1px;top:558.62px;font-size:13.5px;line-height:18px;height:18px;color:#000;-webkit-text-stroke:0.22px #000;"><span class="w" id="w241" style="left:0.00px;letter-spacing:0.472px;">recommend</span><span class="w" id="w242" style="left:78.49px;letter-spacing:0.491px;">optimized</span><span class="w" id="w243" style="left:143.64px;letter-spacing:0.156px;">scheduling</span><span class="w" id="w244" style="left:213.03px;letter-spacing:0.490px;">options</span><span class="w" id="w245" style="left:262.95px;letter-spacing:1.086px;">for</span><span class="w" id="w246" style="left:284.32px;letter-spacing:0.369px;">heating</span><span class="w" id="w247" style="left:334.26px;letter-spacing:0.351px;">and</span><span class="w" id="w248" style="left:360.93px;letter-spacing:0.261px;">cooling.</span></div>
<div class="t" style="left:1538.3px;top:538.62px;font-size:13.5px;line-height:18px;height:18px;color:#000;-webkit-text-stroke:0.22px #000;"><span class="w" id="w249" style="left:0.00px;letter-spacing:-0.001px;">and</span><span class="w" id="w250" style="left:27.49px;letter-spacing:0.000px;">|</span><span class="w" id="w251" style="left:35.97px;letter-spacing:-0.001px;">and</span></div>
<div class="t" style="left:29.3px;top:578.62px;font-size:13.5px;line-height:18px;height:18px;color:#000;-webkit-text-stroke:0.22px #000;"><span class="w" id="w252" style="left:0.00px;letter-spacing:-0.300px;transform:scaleX(0.9504);transform-origin:0 50%;">12</span></div>
<div class="t" style="left:705.3px;top:578.62px;font-size:13.5px;line-height:18px;height:18px;color:#000;-webkit-text-stroke:0.22px #000;"><span class="w" id="w253" style="left:0.00px;letter-spacing:-0.300px;transform:scaleX(0.9504);transform-origin:0 50%;">96</span></div>
<div class="t" style="left:126.1px;top:578.62px;font-size:13.5px;line-height:18px;height:18px;color:#000;-webkit-text-stroke:0.22px #000;"><span class="w" id="w254" style="left:0.00px;letter-spacing:-0.246px;">The</span><span class="w" id="w255" style="left:26.18px;letter-spacing:0.091px;">system</span><span class="w" id="w256" style="left:72.81px;letter-spacing:0.050px;">shall</span><span class="w" id="w257" style="left:104.19px;letter-spacing:0.482px;">support</span><span class="w" id="w258" style="left:155.52px;letter-spacing:0.848px;">the</span><span class="w" id="w259" style="left:179.41px;letter-spacing:0.247px;">simultaneous</span><span class="w" id="w260" style="left:265.08px;letter-spacing:0.114px;">display</span><span class="w" id="w261" style="left:311.20px;letter-spacing:1.288px;">of</span><span class="w" id="w262" style="left:327.22px;letter-spacing:0.000px;">3</span><span class="w" id="w263" style="left:338.21px;letter-spacing:0.117px;">characters</span></div>
<div class="t" style="left:29.3px;top:598.62px;font-size:13.5px;line-height:18px;height:18px;color:#000;-webkit-text-stroke:0.22px #000;"><span class="w" id="w264" style="left:0.00px;letter-spacing:-0.300px;transform:scaleX(0.9504);transform-origin:0 50%;">13</span></div>
<div class="t" style="left:705.3px;top:598.62px;font-size:13.5px;line-height:18px;height:18px;color:#000;-webkit-text-stroke:0.22px #000;"><span class="w" id="w265" style="left:0.00px;letter-spacing:-0.300px;transform:scaleX(0.9504);transform-origin:0 50%;">96</span></div>
<div class="t" style="left:126.1px;top:598.62px;font-size:13.5px;line-height:18px;height:18px;color:#000;-webkit-text-stroke:0.22px #000;"><span class="w" id="w266" style="left:0.00px;letter-spacing:-0.162px;">The</span><span class="w" id="w267" style="left:26.37px;letter-spacing:0.154px;">system</span><span class="w" id="w268" style="left:73.35px;letter-spacing:0.101px;">shall</span><span class="w" id="w269" style="left:104.95px;letter-spacing:0.832px;">monitor</span><span class="w" id="w270" style="left:158.39px;letter-spacing:0.579px;">ambient</span><span class="w" id="w271" style="left:213.33px;letter-spacing:0.602px;">temperature</span><span class="w" id="w272" style="left:295.57px;letter-spacing:0.353px;">and</span><span class="w" id="w273" style="left:322.25px;letter-spacing:0.440px;">relative</span><span class="w" id="w274" style="left:372.29px;letter-spacing:0.676px;">humidity</span></div>
<div class="t" style="left:1538.3px;top:598.62px;font-size:13.5px;line-height:18px;height:18px;color:#000;-webkit-text-stroke:0.22px #000;"><span class="w" id="w275" style="left:0.00px;letter-spacing:-0.016px;">and</span></div>
<div class="t" style="left:29.3px;top:618.62px;font-size:13.5px;line-height:18px;height:18px;color:#000;-webkit-text-stroke:0.22px #000;"><span class="w" id="w276" style="left:0.00px;letter-spacing:-0.300px;transform:scaleX(0.9504);transform-origin:0 50%;">14</span></div>
<div class="t" style="left:705.3px;top:618.62px;font-size:13.5px;line-height:18px;height:18px;color:#000;-webkit-text-stroke:0.22px #000;"><span class="w" id="w277" style="left:0.00px;letter-spacing:-0.300px;transform:scaleX(0.9504);transform-origin:0 50%;">87</span></div>
<div class="t" style="left:126.1px;top:618.62px;font-size:13.5px;line-height:18px;height:18px;color:#000;-webkit-text-stroke:0.22px #000;"><span class="w" id="w278" style="left:0.00px;letter-spacing:-0.158px;">The</span><span class="w" id="w279" style="left:26.39px;letter-spacing:0.158px;">system</span><span class="w" id="w280" style="left:73.38px;letter-spacing:0.104px;">shall</span><span class="w" id="w281" style="left:104.99px;letter-spacing:0.835px;">monitor</span><span class="w" id="w282" style="left:158.46px;letter-spacing:0.174px;">user</span><span class="w" id="w283" style="left:188.68px;letter-spacing:0.418px;">interactions</span><span class="w" id="w284" style="left:265.76px;letter-spacing:1.136px;">with</span><span class="w" id="w285" style="left:296.62px;letter-spacing:0.605px;">temperature</span><span class="w" id="w286" style="left:378.90px;letter-spacing:0.386px;">adjustments,heating/cooling</span></div>
<div class="t" style="left:126.1px;top:638.62px;font-size:13.5px;line-height:18px;height:18px;color:#000;-webkit-text-stroke:0.22px #000;"><span class="w" id="w287" style="left:0.00px;letter-spacing:0.701px;">power</span><span class="w" id="w288" style="left:43.01px;letter-spacing:0.370px;">functions,</span><span class="w" id="w289" style="left:107.56px;letter-spacing:0.318px;">and</span><span class="w" id="w290" style="left:134.15px;letter-spacing:0.099px;">schedule</span><span class="w" id="w291" style="left:192.32px;letter-spacing:-0.117px;">changes.</span></div>
<div class="t" style="left:1538.3px;top:618.62px;font-size:13.5px;line-height:18px;height:18px;color:#000;-webkit-text-stroke:0.22px #000;"><span class="w" id="w292" style="left:0.00px;letter-spacing:-0.016px;">and</span></div>
<div class="t" style="left:29.3px;top:658.62px;font-size:13.5px;line-height:18px;height:18px;color:#000;-webkit-text-stroke:0.22px #000;"><span class="w" id="w293" style="left:0.00px;letter-spacing:-0.300px;transform:scaleX(0.9504);transform-origin:0 50%;">15</span></div>
<div class="t" style="left:705.3px;top:658.62px;font-size:13.5px;line-height:18px;height:18px;color:#000;-webkit-text-stroke:0.22px #000;"><span class="w" id="w294" style="left:0.00px;letter-spacing:-0.300px;transform:scaleX(0.9504);transform-origin:0 50%;">96</span></div>
<div class="t" style="left:126.1px;top:658.62px;font-size:13.5px;line-height:18px;height:18px;color:#000;-webkit-text-stroke:0.22px #000;"><span class="w" id="w295" style="left:0.00px;letter-spacing:-0.207px;">The</span><span class="w" id="w296" style="left:26.27px;letter-spacing:0.601px;">thermostat</span><span class="w" id="w297" style="left:98.89px;letter-spacing:0.074px;">shall</span><span class="w" id="w298" style="left:130.37px;letter-spacing:0.361px;">learn</span><span class="w" id="w299" style="left:165.26px;letter-spacing:0.883px;">the</span><span class="w" id="w300" style="left:189.23px;letter-spacing:0.067px;">user's</span><span class="w" id="w301" style="left:228.58px;letter-spacing:0.571px;">temperature</span><span class="w" id="w302" style="left:310.51px;letter-spacing:0.220px;">preferences</span><span class="w" id="w303" style="left:387.43px;letter-spacing:0.308px;">and</span><span class="w" id="w304" style="left:414.00px;letter-spacing:0.324px;">develop</span><span class="w" id="w305" style="left:466.66px;letter-spacing:0.167px;">an</span><span class="w" id="w306" style="left:485.28px;letter-spacing:0.499px;">automatic</span></div>
<div class="t" style="left:1538.3px;top:658.62px;font-size:13.5px;line-height:18px;height:18px;color:#000;-webkit-text-stroke:0.22px #000;"><span class="w" id="w307" style="left:0.00px;letter-spacing:-0.016px;">and</span></div>
<div class="t" style="left:29.3px;top:678.62px;font-size:13.5px;line-height:18px;height:18px;color:#000;-webkit-text-stroke:0.22px #000;"><span class="w" id="w308" style="left:0.00px;letter-spacing:-0.300px;transform:scaleX(0.9504);transform-origin:0 50%;">16</span></div>
<div class="t" style="left:705.3px;top:678.62px;font-size:13.5px;line-height:18px;height:18px;color:#000;-webkit-text-stroke:0.22px #000;"><span class="w" id="w309" style="left:0.00px;letter-spacing:-0.300px;transform:scaleX(0.9504);transform-origin:0 50%;">96</span></div>
<div class="t" style="left:126.1px;top:678.62px;font-size:13.5px;line-height:18px;height:18px;color:#000;-webkit-text-stroke:0.22px #000;"><span class="w" id="w310" style="left:0.00px;letter-spacing:-0.184px;">The</span><span class="w" id="w311" style="left:26.33px;letter-spacing:0.296px;">learning</span><span class="w" id="w312" style="left:79.87px;letter-spacing:0.530px;">functionality</span><span class="w" id="w313" style="left:160.96px;letter-spacing:0.842px;">will</span><span class="w" id="w314" style="left:185.66px;letter-spacing:0.573px;">allow</span><span class="w" id="w315" style="left:222.14px;letter-spacing:0.904px;">the</span><span class="w" id="w316" style="left:246.16px;letter-spacing:0.617px;">thermostat</span><span class="w" id="w317" style="left:318.92px;letter-spacing:1.809px;">to</span><span class="w" id="w318" style="left:335.42px;letter-spacing:0.411px;">automatically</span><span class="w" id="w319" style="left:422.58px;letter-spacing:0.319px;">create</span><span class="w" id="w320" style="left:465.01px;letter-spacing:0.000px;">a</span><span class="w" id="w321" style="left:475.83px;letter-spacing:0.243px;">customized</span></div>
<div class="t" style="left:126.1px;top:698.62px;font-size:13.5px;line-height:18px;height:18px;color:#000;-webkit-text-stroke:0.22px #000;"><span class="w" id="w322" style="left:0.00px;letter-spacing:0.371px;">heating</span><span class="w" id="w323" style="left:49.96px;letter-spacing:0.354px;">and</span><span class="w" id="w324" style="left:76.63px;letter-spacing:0.295px;">cooling</span><span class="w" id="w325" style="left:124.61px;letter-spacing:0.123px;">schedule</span><span class="w" id="w326" style="left:182.96px;letter-spacing:-0.015px;">based</span><span class="w" id="w327" style="left:223.13px;letter-spacing:0.961px;">on</span><span class="w" id="w328" style="left:242.56px;letter-spacing:0.923px;">the</span><span class="w" id="w329" style="left:266.62px;letter-spacing:0.099px;">user’s</span><span class="w" id="w330" style="left:306.56px;letter-spacing:0.602px;">temperature</span><span class="w" id="w331" style="left:388.81px;letter-spacing:0.249px;">preferences</span><span class="w" id="w332" style="left:466.04px;letter-spacing:0.487px;">over</span><span class="w" id="w333" style="left:497.20px;letter-spacing:0.709px;">time.</span></div>
<div class="t" style="left:1538.3px;top:678.62px;font-size:13.5px;line-height:18px;height:18px;color:#000;-webkit-text-stroke:0.22px #000;"><span class="w" id="w334" style="left:0.00px;letter-spacing:-0.016px;">and</span></div>
<div class="t" style="left:29.3px;top:718.62px;font-size:13.5px;line-height:18px;height:18px;color:#000;-webkit-text-stroke:0.22px #000;"><span class="w" id="w335" style="left:0.00px;letter-spacing:-0.300px;transform:scaleX(0.9504);transform-origin:0 50%;">17</span></div>
<div class="t" style="left:705.3px;top:718.62px;font-size:13.5px;line-height:18px;height:18px;color:#000;-webkit-text-stroke:0.22px #000;"><span class="w" id="w336" style="left:0.00px;letter-spacing:-0.300px;transform:scaleX(0.9504);transform-origin:0 50%;">96</span></div>
<div class="t" style="left:126.1px;top:718.62px;font-size:13.5px;line-height:18px;height:18px;color:#000;-webkit-text-stroke:0.22px #000;"><span class="w" id="w337" style="left:0.00px;letter-spacing:-0.289px;">The</span><span class="w" id="w338" style="left:26.08px;letter-spacing:0.058px;">system</span><span class="w" id="w339" style="left:72.54px;letter-spacing:0.023px;">shall</span><span class="w" id="w340" style="left:103.79px;letter-spacing:0.452px;">support</span><span class="w" id="w341" style="left:154.93px;letter-spacing:0.809px;">the</span><span class="w" id="w342" style="left:178.73px;letter-spacing:0.218px;">simultaneous</span><span class="w" id="w343" style="left:264.07px;letter-spacing:0.087px;">display</span><span class="w" id="w344" style="left:310.02px;letter-spacing:1.241px;">of</span><span class="w" id="w345" style="left:325.97px;letter-spacing:0.000px;">3</span><span class="w" id="w346" style="left:336.93px;letter-spacing:0.090px;">characters</span><span class="w" id="w347" style="left:404.17px;letter-spacing:0.081px;">via</span><span class="w" id="w348" style="left:425.00px;letter-spacing:0.674px;">mini</span><span class="w" id="w349" style="left:455.18px;letter-spacing:-0.300px;transform:scaleX(0.9827);transform-origin:0 50%;">8X8</span><span class="w" id="w350" style="left:481.60px;letter-spacing:-0.300px;transform:scaleX(0.8920);transform-origin:0 50%;">LED</span><span class="w" id="w351" style="left:507.89px;letter-spacing:0.205px;">matrices.</span></div>
<div class="t" style="left:29.3px;top:738.62px;font-size:13.5px;line-height:18px;height:18px;color:#000;-webkit-text-stroke:0.22px #000;"><span class="w" id="w352" style="left:0.00px;letter-spacing:-0.300px;transform:scaleX(0.9504);transform-origin:0 50%;">18</span></div>
<div class="t" style="left:705.3px;top:738.62px;font-size:13.5px;line-height:18px;height:18px;color:#000;-webkit-text-stroke:0.22px #000;"><span class="w" id="w353" style="left:0.00px;letter-spacing:-0.300px;transform:scaleX(0.9504);transform-origin:0 50%;">91</span></div>
<div class="t" style="left:126.1px;top:738.62px;font-size:13.5px;line-height:18px;height:18px;color:#000;-webkit-text-stroke:0.22px #000;"><span class="w" id="w354" style="left:0.00px;letter-spacing:-0.318px;">The</span><span class="w" id="w355" style="left:26.02px;letter-spacing:0.036px;">system</span><span class="w" id="w356" style="left:72.35px;letter-spacing:0.005px;">shall</span><span class="w" id="w357" style="left:103.53px;letter-spacing:0.033px;">leverage</span><span class="w" id="w358" style="left:158.94px;letter-spacing:0.018px;">an</span><span class="w" id="w359" style="left:177.38px;letter-spacing:-0.300px;transform:scaleX(0.9482);transform-origin:0 50%;">I2C</span><span class="w" id="w360" style="left:200.12px;letter-spacing:-0.266px;">Backpack</span><span class="w" id="w361" style="left:260.18px;letter-spacing:0.852px;">that</span><span class="w" id="w362" style="left:288.66px;letter-spacing:0.429px;">permits</span><span class="w" id="w363" style="left:338.88px;letter-spacing:0.783px;">the</span><span class="w" id="w364" style="left:362.62px;letter-spacing:0.299px;">connection</span><span class="w" id="w365" style="left:434.01px;letter-spacing:1.209px;">of</span><span class="w" id="w366" style="left:449.87px;letter-spacing:0.269px;">all</span><span class="w" id="w367" style="left:467.35px;letter-spacing:0.000px;">3</span><span class="w" id="w368" style="left:478.29px;letter-spacing:0.651px;">mini</span><span class="w" id="w369" style="left:508.40px;letter-spacing:-0.052px;">8x8</span><span class="w" id="w370" style="left:533.47px;letter-spacing:-0.300px;transform:scaleX(0.8897);transform-origin:0 50%;">LED</span></div>
<div class="t" style="left:745.3px;top:738.62px;font-size:13.5px;line-height:18px;height:18px;color:#000;-webkit-text-stroke:0.22px #000;"><span class="w" id="w371" style="left:0.00px;letter-spacing:0.492px;">all</span></div>
<div class="t" style="left:29.3px;top:758.62px;font-size:13.5px;line-height:18px;height:18px;color:#000;-webkit-text-stroke:0.22px #000;"><span class="w" id="w372" style="left:0.00px;letter-spacing:-0.300px;transform:scaleX(0.9504);transform-origin:0 50%;">19</span></div>
<div class="t" style="left:705.3px;top:758.62px;font-size:13.5px;line-height:18px;height:18px;color:#000;-webkit-text-stroke:0.22px #000;"><span class="w" id="w373" style="left:0.00px;letter-spacing:-0.300px;transform:scaleX(0.9504);transform-origin:0 50%;">96</span></div>
<div class="t" style="left:126.1px;top:758.62px;font-size:13.5px;line-height:18px;height:18px;color:#000;-webkit-text-stroke:0.22px #000;"><span class="w" id="w374" style="left:0.00px;letter-spacing:0.329px;">Temperature</span><span class="w" id="w375" style="left:83.99px;letter-spacing:0.054px;">shall</span><span class="w" id="w376" style="left:115.39px;letter-spacing:0.403px;">be</span><span class="w" id="w377" style="left:134.23px;letter-spacing:-0.175px;">sensed</span><span class="w" id="w378" style="left:180.31px;letter-spacing:0.821px;">within</span><span class="w" id="w379" style="left:222.34px;letter-spacing:0.123px;">an</span><span class="w" id="w380" style="left:240.91px;letter-spacing:-0.060px;">accuracy</span><span class="w" id="w381" style="left:297.93px;letter-spacing:0.677px;">of.</span></div>
<div class="t" style="left:29.3px;top:818.62px;font-size:13.5px;line-height:18px;height:18px;color:#000;-webkit-text-stroke:0.22px #000;"><span class="w" id="w382" style="left:0.00px;letter-spacing:-0.300px;transform:scaleX(0.9504);transform-origin:0 50%;">20</span></div>
<div class="t" style="left:705.3px;top:818.62px;font-size:13.5px;line-height:18px;height:18px;color:#000;-webkit-text-stroke:0.22px #000;"><span class="w" id="w383" style="left:0.00px;letter-spacing:-0.300px;transform:scaleX(0.9504);transform-origin:0 50%;">96</span></div>
<div class="t" style="left:126.1px;top:818.62px;font-size:13.5px;line-height:18px;height:18px;color:#000;-webkit-text-stroke:0.22px #000;"><span class="w" id="w384" style="left:0.00px;letter-spacing:-0.195px;">The</span><span class="w" id="w385" style="left:26.30px;letter-spacing:0.016px;">sensor</span><span class="w" id="w386" style="left:70.34px;letter-spacing:0.081px;">shall</span><span class="w" id="w387" style="left:101.85px;letter-spacing:-0.040px;">also</span><span class="w" id="w388" style="left:129.92px;letter-spacing:0.561px;">detect</span><span class="w" id="w389" style="left:172.93px;letter-spacing:0.576px;">humidity,</span><span class="w" id="w390" style="left:234.99px;letter-spacing:0.321px;">and</span><span class="w" id="w391" style="left:261.59px;letter-spacing:0.353px;">adjust</span><span class="w" id="w392" style="left:302.81px;letter-spacing:0.894px;">the</span><span class="w" id="w393" style="left:326.80px;letter-spacing:0.580px;">temperature</span><span class="w" id="w394" style="left:408.82px;letter-spacing:0.442px;">appropriately</span><span class="w" id="w395" style="left:495.60px;letter-spacing:0.350px;">taking</span><span class="w" id="w396" style="left:536.80px;letter-spacing:0.905px;">into</span></div>
<div class="t" style="left:1538.3px;top:818.62px;font-size:13.5px;line-height:18px;height:18px;color:#000;-webkit-text-stroke:0.22px #000;"><span class="w" id="w397" style="left:0.00px;letter-spacing:-0.016px;">and</span></div>
<div class="t" style="left:29.3px;top:838.62px;font-size:13.5px;line-height:18px;height:18px;color:#000;-webkit-text-stroke:0.22px #000;"><span class="w" id="w398" style="left:0.00px;letter-spacing:-0.300px;transform:scaleX(0.9504);transform-origin:0 50%;">21</span></div>
<div class="t" style="left:705.3px;top:838.62px;font-size:13.5px;line-height:18px;height:18px;color:#000;-webkit-text-stroke:0.22px #000;"><span class="w" id="w399" style="left:0.00px;letter-spacing:-0.300px;transform:scaleX(0.9504);transform-origin:0 50%;">96</span></div>
<div class="t" style="left:126.1px;top:838.62px;font-size:13.5px;line-height:18px;height:18px;color:#000;-webkit-text-stroke:0.22px #000;"><span class="w" id="w400" style="left:0.00px;letter-spacing:-0.330px;">The</span><span class="w" id="w401" style="left:25.99px;letter-spacing:-0.080px;">sensor</span><span class="w" id="w402" style="left:69.51px;letter-spacing:-0.002px;">shall</span><span class="w" id="w403" style="left:100.65px;letter-spacing:0.467px;">detect</span><span class="w" id="w404" style="left:143.15px;letter-spacing:0.705px;">motion</span><span class="w" id="w405" style="left:190.59px;letter-spacing:0.918px;">at</span><span class="w" id="w406" style="left:205.99px;letter-spacing:0.000px;">a</span><span class="w" id="w407" style="left:216.71px;letter-spacing:0.114px;">170</span><span class="w" id="w408" style="left:242.86px;letter-spacing:0.085px;">degree</span><span class="w" id="w409" style="left:288.71px;letter-spacing:0.054px;">range</span><span class="w" id="w410" style="left:326.84px;letter-spacing:0.184px;">and</span><span class="w" id="w411" style="left:353.12px;letter-spacing:0.142px;">15</span><span class="w" id="w412" style="left:371.68px;letter-spacing:0.649px;">feet</span><span class="w" id="w413" style="left:399.54px;letter-spacing:0.089px;">distance.</span></div>
<div class="t" style="left:1538.3px;top:838.62px;font-size:13.5px;line-height:18px;height:18px;color:#000;-webkit-text-stroke:0.22px #000;"><span class="w" id="w414" style="left:0.00px;letter-spacing:-0.016px;">and</span></div>
<div class="t" style="left:29.3px;top:858.62px;font-size:13.5px;line-height:18px;height:18px;color:#000;-webkit-text-stroke:0.22px #000;"><span class="w" id="w415" style="left:0.00px;letter-spacing:-0.300px;transform:scaleX(0.9504);transform-origin:0 50%;">22</span></div>
<div class="t" style="left:705.3px;top:858.62px;font-size:13.5px;line-height:18px;height:18px;color:#000;-webkit-text-stroke:0.22px #000;"><span class="w" id="w416" style="left:0.00px;letter-spacing:-0.300px;transform:scaleX(0.9504);transform-origin:0 50%;">91</span></div>
<div class="t" style="left:126.1px;top:858.62px;font-size:13.5px;line-height:18px;height:18px;color:#000;-webkit-text-stroke:0.22px #000;"><span class="w" id="w417" style="left:0.00px;letter-spacing:0.026px;">using</span><span class="w" id="w418" style="left:35.80px;letter-spacing:0.874px;">the</span><span class="w" id="w419" style="left:59.75px;letter-spacing:0.534px;">mobile</span><span class="w" id="w420" style="left:105.62px;letter-spacing:0.298px;">app</span><span class="w" id="w421" style="left:132.16px;letter-spacing:-0.300px;transform:scaleX(0.8948);transform-origin:0 50%;">GPS,</span><span class="w" id="w422" style="left:163.64px;letter-spacing:0.391px;">automatically</span><span class="w" id="w423" style="left:250.55px;letter-spacing:0.241px;">set</span><span class="w" id="w424" style="left:272.47px;letter-spacing:0.874px;">the</span><span class="w" id="w425" style="left:296.41px;letter-spacing:0.594px;">thermostat</span><span class="w" id="w426" style="left:368.96px;letter-spacing:1.770px;">to</span><span class="w" id="w427" style="left:385.41px;letter-spacing:0.206px;">away</span><span class="w" id="w428" style="left:420.96px;letter-spacing:0.644px;">when</span><span class="w" id="w429" style="left:458.60px;letter-spacing:0.488px;">you</span><span class="w" id="w430" style="left:484.77px;letter-spacing:0.075px;">leave</span><span class="w" id="w431" style="left:520.77px;letter-spacing:0.588px;">your</span></div>
<div class="t" style="left:1134.3px;top:858.62px;font-size:13.5px;line-height:18px;height:18px;color:#000;-webkit-text-stroke:0.22px #000;"><span class="w" id="w432" style="left:0.00px;letter-spacing:0.386px;">you</span><span class="w" id="w433" style="left:27.63px;letter-spacing:0.000px;">|</span><span class="w" id="w434" style="left:36.22px;letter-spacing:0.503px;">your</span></div>
<div class="t" style="left:1325.3px;top:858.62px;font-size:13.5px;line-height:18px;height:18px;color:#000;-webkit-text-stroke:0.22px #000;"><span class="w" id="w435" style="left:0.00px;letter-spacing:0.180px;">using</span></div>
<div class="t" style="left:29.3px;top:878.62px;font-size:13.5px;line-height:18px;height:18px;color:#000;-webkit-text-stroke:0.22px #000;"><span class="w" id="w436" style="left:0.00px;letter-spacing:-0.300px;transform:scaleX(0.9504);transform-origin:0 50%;">23</span></div>
<div class="t" style="left:705.3px;top:878.62px;font-size:13.5px;line-height:18px;height:18px;color:#000;-webkit-text-stroke:0.22px #000;"><span class="w" id="w437" style="left:0.00px;letter-spacing:-0.300px;transform:scaleX(0.9575);transform-origin:0 50%;">100</span></div>
<div class="t" style="left:126.1px;top:878.62px;font-size:13.5px;line-height:18px;height:18px;color:#000;-webkit-text-stroke:0.22px #000;"><span class="w" id="w438" style="left:0.00px;letter-spacing:0.409px;">Automatically</span><span class="w" id="w439" style="left:88.64px;letter-spacing:0.565px;">detect</span><span class="w" id="w440" style="left:131.67px;letter-spacing:0.673px;">when</span><span class="w" id="w441" style="left:169.40px;letter-spacing:0.900px;">the</span><span class="w" id="w442" style="left:193.40px;letter-spacing:0.150px;">user</span><span class="w" id="w443" style="left:223.55px;letter-spacing:0.184px;">arrives</span><span class="w" id="w444" style="left:268.59px;letter-spacing:1.071px;">at</span><span class="w" id="w445" style="left:284.35px;letter-spacing:0.607px;">home</span><span class="w" id="w446" style="left:323.38px;letter-spacing:0.046px;">using</span><span class="w" id="w447" style="left:359.28px;letter-spacing:0.900px;">the</span><span class="w" id="w448" style="left:383.28px;letter-spacing:0.556px;">mobile</span><span class="w" id="w449" style="left:429.27px;letter-spacing:0.469px;">phone</span><span class="w" id="w450" style="left:472.12px;letter-spacing:-0.300px;transform:scaleX(0.8985);transform-origin:0 50%;">GPS.</span></div>
<div class="t" style="left:29.3px;top:898.62px;font-size:13.5px;line-height:18px;height:18px;color:#000;-webkit-text-stroke:0.22px #000;"><span class="w" id="w451" style="left:0.00px;letter-spacing:-0.300px;transform:scaleX(0.9504);transform-origin:0 50%;">25</span></div>
<div class="t" style="left:705.3px;top:898.62px;font-size:13.5px;line-height:18px;height:18px;color:#000;-webkit-text-stroke:0.22px #000;"><span class="w" id="w452" style="left:0.00px;letter-spacing:-0.300px;transform:scaleX(0.9504);transform-origin:0 50%;">83</span></div>
<div class="t" style="left:126.1px;top:898.62px;font-size:13.5px;line-height:18px;height:18px;color:#000;-webkit-text-stroke:0.22px #000;"><span class="w" id="w453" style="left:0.00px;letter-spacing:-0.051px;">User</span><span class="w" id="w454" style="left:31.77px;letter-spacing:0.265px;">should</span><span class="w" id="w455" style="left:76.31px;letter-spacing:0.410px;">be</span><span class="w" id="w456" style="left:95.16px;letter-spacing:0.201px;">able</span><span class="w" id="w457" style="left:124.71px;letter-spacing:1.750px;">to</span><span class="w" id="w458" style="left:141.14px;letter-spacing:0.981px;">torn</span><span class="w" id="w459" style="left:170.76px;letter-spacing:1.022px;">on/off</span><span class="w" id="w460" style="left:213.06px;letter-spacing:0.858px;">the</span><span class="w" id="w461" style="left:236.97px;letter-spacing:0.482px;">heat</span><span class="w" id="w462" style="left:268.11px;letter-spacing:0.280px;">and</span><span class="w" id="w463" style="left:294.62px;letter-spacing:0.248px;">cooling</span><span class="w" id="w464" style="left:342.30px;letter-spacing:1.301px;">of</span><span class="w" id="w465" style="left:358.27px;letter-spacing:0.739px;">their</span><span class="w" id="w466" style="left:390.91px;letter-spacing:0.582px;">thermostat</span><span class="w" id="w467" style="left:463.35px;letter-spacing:0.555px;">remotely</span><span class="w" id="w468" style="left:522.41px;letter-spacing:0.962px;">from</span></div>
<div class="t" style="left:1134.3px;top:898.62px;font-size:13.5px;line-height:18px;height:18px;color:#000;-webkit-text-stroke:0.22px #000;"><span class="w" id="w469" style="left:0.00px;letter-spacing:0.934px;">their</span></div>
<div class="t" style="left:1538.3px;top:898.62px;font-size:13.5px;line-height:18px;height:18px;color:#000;-webkit-text-stroke:0.22px #000;"><span class="w" id="w470" style="left:0.00px;letter-spacing:-0.016px;">and</span></div>
<div class="t" style="left:29.3px;top:918.62px;font-size:13.5px;line-height:18px;height:18px;color:#000;-webkit-text-stroke:0.22px #000;"><span class="w" id="w471" style="left:0.00px;letter-spacing:-0.300px;transform:scaleX(0.9504);transform-origin:0 50%;">26</span></div>
<div class="t" style="left:705.3px;top:918.62px;font-size:13.5px;line-height:18px;height:18px;color:#000;-webkit-text-stroke:0.22px #000;"><span class="w" id="w472" style="left:0.00px;letter-spacing:-0.300px;transform:scaleX(0.9504);transform-origin:0 50%;">87</span></div>
<div class="t" style="left:126.1px;top:918.62px;font-size:13.5px;line-height:18px;height:18px;color:#000;-webkit-text-stroke:0.22px #000;"><span class="w" id="w473" style="left:0.00px;letter-spacing:-0.040px;">User</span><span class="w" id="w474" style="left:31.81px;letter-spacing:0.274px;">should</span><span class="w" id="w475" style="left:76.39px;letter-spacing:0.428px;">be</span><span class="w" id="w476" style="left:95.27px;letter-spacing:0.212px;">able</span><span class="w" id="w477" style="left:124.85px;letter-spacing:1.766px;">to</span><span class="w" id="w478" style="left:141.30px;letter-spacing:0.238px;">set</span><span class="w" id="w479" style="left:163.07px;letter-spacing:0.000px;">a</span><span class="w" id="w480" style="left:173.86px;letter-spacing:0.597px;">max/min,</span><span class="w" id="w481" style="left:236.22px;letter-spacing:0.294px;">and</span><span class="w" id="w482" style="left:262.76px;letter-spacing:0.551px;">away/home</span><span class="w" id="w483" style="left:339.63px;letter-spacing:0.452px;">options</span><span class="w" id="w484" style="left:389.31px;letter-spacing:0.297px;">daily</span><span class="w" id="w485" style="left:421.68px;letter-spacing:0.974px;">from</span><span class="w" id="w486" style="left:454.88px;letter-spacing:0.000px;">a</span><span class="w" id="w487" style="left:465.67px;letter-spacing:0.120px;">scheduling</span></div>
<div class="t" style="left:1538.3px;top:918.62px;font-size:13.5px;line-height:18px;height:18px;color:#000;-webkit-text-stroke:0.22px #000;"><span class="w" id="w488" style="left:0.00px;letter-spacing:-0.016px;">and</span></div>
<div class="t" style="left:29.3px;top:938.62px;font-size:13.5px;line-height:18px;height:18px;color:#000;-webkit-text-stroke:0.22px #000;"><span class="w" id="w489" style="left:0.00px;letter-spacing:-0.300px;transform:scaleX(0.9504);transform-origin:0 50%;">27</span></div>
<div class="t" style="left:705.3px;top:938.62px;font-size:13.5px;line-height:18px;height:18px;color:#000;-webkit-text-stroke:0.22px #000;"><span class="w" id="w490" style="left:0.00px;letter-spacing:-0.300px;transform:scaleX(0.9504);transform-origin:0 50%;">91</span></div>
<div class="t" style="left:126.1px;top:938.62px;font-size:13.5px;line-height:18px;height:18px;color:#000;-webkit-text-stroke:0.22px #000;"><span class="w" id="w491" style="left:0.00px;letter-spacing:-0.044px;">User</span><span class="w" id="w492" style="left:31.80px;letter-spacing:0.271px;">should</span><span class="w" id="w493" style="left:76.37px;letter-spacing:0.422px;">be</span><span class="w" id="w494" style="left:95.24px;letter-spacing:0.209px;">able</span><span class="w" id="w495" style="left:124.81px;letter-spacing:1.761px;">to</span><span class="w" id="w496" style="left:141.25px;letter-spacing:-0.420px;">see</span><span class="w" id="w497" style="left:165.47px;letter-spacing:0.000px;">a</span><span class="w" id="w498" style="left:176.26px;letter-spacing:0.170px;">calendar</span><span class="w" id="w499" style="left:232.66px;letter-spacing:1.311px;">of</span><span class="w" id="w500" style="left:248.65px;letter-spacing:0.746px;">their</span><span class="w" id="w501" style="left:281.32px;letter-spacing:0.181px;">energy</span><span class="w" id="w502" style="left:326.92px;letter-spacing:-0.272px;">usage</span><span class="w" id="w503" style="left:366.04px;letter-spacing:0.392px;">history.</span></div>
<div class="t" style="left:1134.3px;top:938.62px;font-size:13.5px;line-height:18px;height:18px;color:#000;-webkit-text-stroke:0.22px #000;"><span class="w" id="w504" style="left:0.00px;letter-spacing:0.934px;">their</span></div>
<div class="t" style="left:29.3px;top:958.62px;font-size:13.5px;line-height:18px;height:18px;color:#000;-webkit-text-stroke:0.22px #000;"><span class="w" id="w505" style="left:0.00px;letter-spacing:-0.300px;transform:scaleX(0.9504);transform-origin:0 50%;">28</span></div>
<div class="t" style="left:705.3px;top:958.62px;font-size:13.5px;line-height:18px;height:18px;color:#000;-webkit-text-stroke:0.22px #000;"><span class="w" id="w506" style="left:0.00px;letter-spacing:-0.300px;transform:scaleX(0.9504);transform-origin:0 50%;">91</span></div>
<div class="t" style="left:126.1px;top:958.62px;font-size:13.5px;line-height:18px;height:18px;color:#000;-webkit-text-stroke:0.22px #000;"><span class="w" id="w507" style="left:0.00px;letter-spacing:-0.004px;">User</span><span class="w" id="w508" style="left:31.93px;letter-spacing:0.306px;">should</span><span class="w" id="w509" style="left:76.69px;letter-spacing:0.488px;">be</span><span class="w" id="w510" style="left:95.64px;letter-spacing:0.245px;">able</span><span class="w" id="w511" style="left:125.34px;letter-spacing:1.816px;">to</span><span class="w" id="w512" style="left:141.85px;letter-spacing:0.274px;">set</span><span class="w" id="w513" style="left:163.84px;letter-spacing:0.658px;">multiple</span><span class="w" id="w514" style="left:218.41px;letter-spacing:-0.146px;">zones</span><span class="w" id="w515" style="left:257.28px;letter-spacing:1.816px;">to</span><span class="w" id="w516" style="left:273.80px;letter-spacing:0.103px;">manage</span><span class="w" id="w517" style="left:326.54px;letter-spacing:1.361px;">if</span><span class="w" id="w518" style="left:338.08px;letter-spacing:0.645px;">they</span><span class="w" id="w519" style="left:368.98px;letter-spacing:0.119px;">have</span><span class="w" id="w520" style="left:402.04px;letter-spacing:0.658px;">multiple</span><span class="w" id="w521" style="left:456.61px;letter-spacing:0.485px;">smart</span></div>
<div class="t" style="left:1134.3px;top:958.62px;font-size:13.5px;line-height:18px;height:18px;color:#000;-webkit-text-stroke:0.22px #000;"><span class="w" id="w522" style="left:0.00px;letter-spacing:0.823px;">they</span></div>
<div class="t" style="left:29.3px;top:978.62px;font-size:13.5px;line-height:18px;height:18px;color:#000;-webkit-text-stroke:0.22px #000;"><span class="w" id="w523" style="left:0.00px;letter-spacing:-0.300px;transform:scaleX(0.9504);transform-origin:0 50%;">29</span></div>
<div class="t" style="left:705.3px;top:978.62px;font-size:13.5px;line-height:18px;height:18px;color:#000;-webkit-text-stroke:0.22px #000;"><span class="w" id="w524" style="left:0.00px;letter-spacing:-0.300px;transform:scaleX(0.9504);transform-origin:0 50%;">83</span></div>
<div class="t" style="left:126.1px;top:978.62px;font-size:13.5px;line-height:18px;height:18px;color:#000;-webkit-text-stroke:0.22px #000;"><span class="w" id="w525" style="left:0.00px;letter-spacing:-0.300px;transform:scaleX(0.9601);transform-origin:0 50%;">NOTE:</span><span class="w" id="w526" style="left:41.88px;letter-spacing:0.064px;">There</span><span class="w" id="w527" style="left:80.83px;letter-spacing:0.257px;">should</span><span class="w" id="w528" style="left:125.32px;letter-spacing:0.396px;">be</span><span class="w" id="w529" style="left:144.01px;letter-spacing:0.000px;">a</span><span class="w" id="w530" style="left:154.79px;letter-spacing:0.398px;">warning</span><span class="w" id="w531" style="left:207.87px;letter-spacing:0.906px;">that</span><span class="w" id="w532" style="left:236.53px;letter-spacing:-0.133px;">users</span><span class="w" id="w533" style="left:272.42px;letter-spacing:0.549px;">home</span><span class="w" id="w534" style="left:311.26px;letter-spacing:0.291px;">may</span><span class="w" id="w535" style="left:340.76px;letter-spacing:1.073px;">not</span><span class="w" id="w536" style="left:365.10px;letter-spacing:0.396px;">be</span><span class="w" id="w537" style="left:383.94px;letter-spacing:0.367px;">heated</span><span class="w" id="w538" style="left:430.48px;letter-spacing:1.739px;">to</span><span class="w" id="w539" style="left:446.89px;letter-spacing:0.733px;">their</span><span class="w" id="w540" style="left:479.50px;letter-spacing:0.299px;">liking</span><span class="w" id="w541" style="left:515.17px;letter-spacing:0.617px;">when</span></div>
<div class="t" style="left:126.1px;top:998.62px;font-size:13.5px;line-height:18px;height:18px;color:#000;-webkit-text-stroke:0.22px #000;"><span class="w" id="w542" style="left:0.00px;letter-spacing:0.660px;">they</span><span class="w" id="w543" style="left:30.95px;letter-spacing:0.403px;">arrive</span><span class="w" id="w544" style="left:70.16px;letter-spacing:1.102px;">at</span><span class="w" id="w545" style="left:85.97px;letter-spacing:0.638px;">home</span><span class="w" id="w546" style="left:125.10px;letter-spacing:1.135px;">with</span><span class="w" id="w547" style="left:155.95px;letter-spacing:0.496px;">this</span><span class="w" id="w548" style="left:181.89px;letter-spacing:0.421px;">setting</span><span class="w" id="w549" style="left:227.63px;letter-spacing:0.265px;">enabled.</span></div>
<div class="t" style="left:981.3px;top:978.62px;font-size:13.5px;line-height:18px;height:18px;color:#000;-webkit-text-stroke:0.22px #000;"><span class="w" id="w550" style="left:0.00px;letter-spacing:0.859px;">not</span></div>
<div class="t" style="left:1134.3px;top:978.62px;font-size:13.5px;line-height:18px;height:18px;color:#000;-webkit-text-stroke:0.22px #000;"><span class="w" id="w551" style="left:0.00px;letter-spacing:0.809px;">their</span><span class="w" id="w552" style="left:34.70px;letter-spacing:0.000px;">|</span><span class="w" id="w553" style="left:43.41px;letter-spacing:0.686px;">they</span></div>
<div class="t" style="left:29.3px;top:1018.62px;font-size:13.5px;line-height:18px;height:18px;color:#000;-webkit-text-stroke:0.22px #000;"><span class="w" id="w554" style="left:0.00px;letter-spacing:-0.300px;transform:scaleX(0.9504);transform-origin:0 50%;">31</span></div>
<div class="t" style="left:705.3px;top:1018.62px;font-size:13.5px;line-height:18px;height:18px;color:#000;-webkit-text-stroke:0.22px #000;"><span class="w" id="w555" style="left:0.00px;letter-spacing:-0.300px;transform:scaleX(0.9504);transform-origin:0 50%;">78</span></div>
<div class="t" style="left:126.1px;top:1018.62px;font-size:13.5px;line-height:18px;height:18px;color:#000;-webkit-text-stroke:0.22px #000;"><span class="w" id="w556" style="left:-0.14px;letter-spacing:0.000px;">A</span><span class="w" id="w557" style="left:12.15px;letter-spacing:0.345px;">study</span><span class="w" id="w558" style="left:49.22px;letter-spacing:0.501px;">by</span><span class="w" id="w559" style="left:70.82px;letter-spacing:0.130px;">Statista</span><span class="w" id="w560" style="left:123.59px;letter-spacing:0.642px;">found</span><span class="w" id="w561" style="left:163.37px;letter-spacing:0.916px;">that</span><span class="w" id="w562" style="left:192.06px;letter-spacing:0.430px;">over</span><span class="w" id="w563" style="left:226.44px;letter-spacing:-0.467px;">65%</span><span class="w" id="w564" style="left:255.95px;letter-spacing:1.304px;">of</span><span class="w" id="w565" style="left:271.94px;letter-spacing:-0.124px;">users</span><span class="w" id="w566" style="left:307.87px;letter-spacing:0.562px;">prefer</span><span class="w" id="w567" style="left:349.37px;letter-spacing:0.021px;">single</span><span class="w" id="w568" style="left:388.17px;letter-spacing:0.107px;">sign-on</span><span class="w" id="w569" style="left:436.51px;letter-spacing:-0.300px;transform:scaleX(0.9094);transform-origin:0 50%;">(SSO)</span><span class="w" id="w570" style="left:476.37px;letter-spacing:0.445px;">options</span><span class="w" id="w571" style="left:525.99px;letter-spacing:0.347px;">like</span></div>
<div class="t" style="left:126.1px;top:1038.62px;font-size:13.5px;line-height:18px;height:18px;color:#000;-webkit-text-stroke:0.22px #000;"><span class="w" id="w572" style="left:0.00px;letter-spacing:0.322px;">Apple</span><span class="w" id="w573" style="left:39.26px;letter-spacing:-0.318px;">ID</span><span class="w" id="w574" style="left:55.88px;letter-spacing:1.300px;">or</span><span class="w" id="w575" style="left:72.63px;letter-spacing:0.057px;">Google</span><span class="w" id="w576" style="left:119.89px;letter-spacing:0.138px;">sign-in,</span><span class="w" id="w577" style="left:167.83px;letter-spacing:-0.300px;transform:scaleX(0.9471);transform-origin:0 50%;">as</span><span class="w" id="w578" style="left:184.49px;letter-spacing:1.830px;">it</span><span class="w" id="w579" style="left:196.51px;letter-spacing:0.296px;">simplifies</span><span class="w" id="w580" style="left:258.12px;letter-spacing:0.930px;">the</span><span class="w" id="w581" style="left:282.20px;letter-spacing:0.401px;">login</span><span class="w" id="w582" style="left:315.77px;letter-spacing:-0.016px;">process</span><span class="w" id="w583" style="left:366.39px;letter-spacing:0.362px;">and</span><span class="w" id="w584" style="left:393.08px;letter-spacing:0.124px;">reduces</span><span class="w" id="w585" style="left:445.29px;letter-spacing:0.667px;">friction</span><span class="w" id="w586" style="left:493.17px;letter-spacing:1.095px;">for</span><span class="w" id="w587" style="left:514.56px;letter-spacing:-0.069px;">users</span></div>
<div class="t" style="left:1050.3px;top:1018.62px;font-size:13.5px;line-height:18px;height:18px;color:#000;-webkit-text-stroke:0.22px #000;"><span class="w" id="w588" style="left:-0.00px;letter-spacing:0.000px;">(</span><span class="w" id="w589" style="left:9.49px;letter-spacing:0.000px;">|</span><span class="w" id="w590" style="left:18.00px;letter-spacing:0.000px;">)</span></div>
<div class="t" style="left:1134.3px;top:1018.62px;font-size:13.5px;line-height:18px;height:18px;color:#000;-webkit-text-stroke:0.22px #000;"><span class="w" id="w591" style="left:0.00px;letter-spacing:1.750px;">it</span></div>
<div class="t" style="left:1538.3px;top:1018.62px;font-size:13.5px;line-height:18px;height:18px;color:#000;-webkit-text-stroke:0.22px #000;"><span class="w" id="w592" style="left:0.00px;letter-spacing:0.787px;">or</span><span class="w" id="w593" style="left:17.71px;letter-spacing:0.000px;">|</span><span class="w" id="w594" style="left:26.14px;letter-spacing:-0.086px;">and</span></div>
<div class="t" style="left:29.3px;top:1058.62px;font-size:13.5px;line-height:18px;height:18px;color:#000;-webkit-text-stroke:0.22px #000;"><span class="w" id="w595" style="left:0.00px;letter-spacing:-0.300px;transform:scaleX(0.9504);transform-origin:0 50%;">32</span></div>
<div class="t" style="left:705.3px;top:1058.62px;font-size:13.5px;line-height:18px;height:18px;color:#000;-webkit-text-stroke:0.22px #000;"><span class="w" id="w596" style="left:0.00px;letter-spacing:-0.300px;transform:scaleX(0.9504);transform-origin:0 50%;">87</span></div>
<div class="t" style="left:126.1px;top:1058.62px;font-size:13.5px;line-height:18px;height:18px;color:#000;-webkit-text-stroke:0.22px #000;"><span class="w" id="w597" style="left:0.00px;letter-spacing:-0.180px;">The</span><span class="w" id="w598" style="left:26.34px;letter-spacing:0.336px;">app</span><span class="w" id="w599" style="left:52.97px;letter-spacing:0.304px;">should</span><span class="w" id="w600" style="left:97.71px;letter-spacing:0.769px;">offer</span><span class="w" id="w601" style="left:131.23px;letter-spacing:-0.087px;">users</span><span class="w" id="w602" style="left:167.33px;letter-spacing:0.907px;">the</span><span class="w" id="w603" style="left:191.35px;letter-spacing:0.740px;">option</span><span class="w" id="w604" style="left:235.28px;letter-spacing:1.813px;">to</span><span class="w" id="w605" style="left:251.79px;letter-spacing:0.419px;">take</span><span class="w" id="w606" style="left:282.00px;letter-spacing:0.192px;">skill</span><span class="w" id="w607" style="left:308.70px;letter-spacing:-0.160px;">assessments</span><span class="w" id="w608" style="left:389.31px;letter-spacing:1.271px;">or</span><span class="w" id="w609" style="left:406.03px;letter-spacing:0.454px;">participate</span><span class="w" id="w610" style="left:476.30px;letter-spacing:0.934px;">in</span><span class="w" id="w611" style="left:491.17px;letter-spacing:0.487px;">certification</span></div>
<div class="t" style="left:126.1px;top:1078.62px;font-size:13.5px;line-height:18px;height:18px;color:#000;-webkit-text-stroke:0.22px #000;"><span class="w" id="w612" style="left:0.00px;letter-spacing:0.280px;">programs</span><span class="w" id="w613" style="left:62.42px;letter-spacing:0.480px;">directly</span><span class="w" id="w614" style="left:111.97px;letter-spacing:0.861px;">within</span><span class="w" id="w615" style="left:154.22px;letter-spacing:0.907px;">the</span><span class="w" id="w616" style="left:178.25px;letter-spacing:0.235px;">app,</span><span class="w" id="w617" style="left:208.66px;letter-spacing:0.539px;">which</span><span class="w" id="w618" style="left:248.77px;letter-spacing:-0.067px;">can</span><span class="w" id="w619" style="left:273.84px;letter-spacing:0.484px;">be</span><span class="w" id="w620" style="left:292.79px;letter-spacing:0.293px;">added</span><span class="w" id="w621" style="left:334.93px;letter-spacing:1.813px;">to</span><span class="w" id="w622" style="left:351.44px;letter-spacing:0.775px;">their</span><span class="w" id="w623" style="left:384.23px;letter-spacing:0.245px;">professional</span><span class="w" id="w624" style="left:463.15px;letter-spacing:0.359px;">profiles.</span></div>
<div class="t" style="left:1134.3px;top:1058.62px;font-size:13.5px;line-height:18px;height:18px;color:#000;-webkit-text-stroke:0.22px #000;"><span class="w" id="w625" style="left:0.00px;letter-spacing:0.934px;">their</span></div>
<div class="t" style="left:1538.3px;top:1058.62px;font-size:13.5px;line-height:18px;height:18px;color:#000;-webkit-text-stroke:0.22px #000;"><span class="w" id="w626" style="left:0.00px;letter-spacing:0.484px;">or</span></div>
<div class="t" style="left:29.3px;top:1098.62px;font-size:13.5px;line-height:18px;height:18px;color:#000;-webkit-text-stroke:0.22px #000;"><span class="w" id="w627" style="left:0.00px;letter-spacing:-0.300px;transform:scaleX(0.9504);transform-origin:0 50%;">33</span></div>
<div class="t" style="left:705.3px;top:1098.62px;font-size:13.5px;line-height:18px;height:18px;color:#000;-webkit-text-stroke:0.22px #000;"><span class="w" id="w628" style="left:0.00px;letter-spacing:-0.300px;transform:scaleX(0.9504);transform-origin:0 50%;">91</span></div>
<div class="t" style="left:126.1px;top:1098.62px;font-size:13.5px;line-height:18px;height:18px;color:#000;-webkit-text-stroke:0.22px #000;"><span class="w" id="w629" style="left:0.00px;letter-spacing:-0.159px;">Users</span><span class="w" id="w630" style="left:38.08px;letter-spacing:0.671px;">must</span><span class="w" id="w631" style="left:72.81px;letter-spacing:0.575px;">be</span><span class="w" id="w632" style="left:91.86px;letter-spacing:0.294px;">able</span><span class="w" id="w633" style="left:121.73px;letter-spacing:1.889px;">to</span><span class="w" id="w634" style="left:138.33px;letter-spacing:0.367px;">create</span><span class="w" id="w635" style="left:181.04px;letter-spacing:0.000px;">a</span><span class="w" id="w636" style="left:191.90px;letter-spacing:0.476px;">detailed</span><span class="w" id="w637" style="left:245.98px;letter-spacing:0.285px;">professional</span><span class="w" id="w638" style="left:325.36px;letter-spacing:0.558px;">profile,</span><span class="w" id="w639" style="left:373.24px;letter-spacing:0.362px;">including</span><span class="w" id="w640" style="left:432.89px;letter-spacing:0.280px;">personal</span><span class="w" id="w641" style="left:490.10px;letter-spacing:0.690px;">information</span></div>
<div class="t" style="left:1538.3px;top:1098.62px;font-size:13.5px;line-height:18px;height:18px;color:#000;-webkit-text-stroke:0.22px #000;"><span class="w" id="w642" style="left:0.00px;letter-spacing:0.641px;">or</span><span class="w" id="w643" style="left:17.49px;letter-spacing:0.000px;">|</span><span class="w" id="w644" style="left:25.84px;letter-spacing:0.641px;">or</span></div>
</div></div>
<div style="left:122px;top:455px;width:582px;height:2px;background:#107c41;"></div>
<div style="left:122px;top:496px;width:578px;height:2px;background:#107c41;"></div>
<div style="left:122px;top:455px;width:2px;height:43px;background:#107c41;"></div>
<div style="left:702px;top:455px;width:2px;height:40px;background:#107c41;"></div>
<div style="left:699px;top:493px;width:7px;height:7px;background:#ffffff;"></div>
<div style="left:700px;top:494px;width:5px;height:5px;background:#107c41;"></div>
<div style="left:0px;top:0px;width:1706px;height:49px;background:#107c41;"></div>
<svg style="left:15px;top:15px;" width="20" height="20" viewBox="0 0 20 20"><path d="M7.5 2.5 H17.5 V17.5 H7.5" fill="none" stroke="#ffffff" stroke-width="1.3" stroke-linecap="round" stroke-linejoin="round" /><path d="M11 6.5 H17.5 M11 10 H17.5 M11 13.5 H17.5 M13.5 2.5 V17.5" fill="none" stroke="#ffffff" stroke-width="1.1" stroke-linecap="round" stroke-linejoin="round" /><rect x="1.5" y="5.5" width="9" height="9" fill="#ffffff"/><path d="M4 7.5 L8 12.5 M8 7.5 L4 12.5" fill="none" stroke="#107c41" stroke-width="1.3" stroke-linecap="round" stroke-linejoin="round" /></svg>
<div class="t" id="t645" style="top:16.77px;font-size:12.2px;line-height:16px;height:16px;color:#fff;letter-spacing:-0.300px;transform:scaleX(0.9358);transform-origin:0 50%;left:49px;">AutoSave</div>
<div style="left:104px;top:13.9px;width:45px;height:20px;border:1.3px solid #fff;border-radius:10px;"></div>
<div style="left:107.9px;top:17.8px;width:12.4px;height:12.4px;border-radius:50%;background:#fff;"></div>
<div class="t" id="t646" style="top:16.77px;font-size:12.2px;line-height:16px;height:16px;color:#fff;letter-spacing:0.117px;left:126.5px;">Off</div>
<svg style="left:160px;top:15px;" width="20" height="20" viewBox="0 0 20 20"><path d="M2.5 2.5 H14.5 L17.5 5.5 V17.5 H2.5 Z" fill="none" stroke="#ffffff" stroke-width="1.2" stroke-linecap="round" stroke-linejoin="round" /><path d="M6 2.5 V7 H13 V2.5 M5.5 17.5 V11.5 H14.5 V17.5" fill="none" stroke="#ffffff" stroke-width="1.2" stroke-linecap="round" stroke-linejoin="round" /></svg>
<svg style="left:190px;top:15px;" width="20" height="20" viewBox="0 0 20 20"><path d="M3 3.5 V8.5 H8 M3.3 8.3 C5.5 4.5 10 3.2 13.3 5.2 C16.8 7.4 17 12 14.3 14.6 L9.5 19" fill="none" stroke="#ffffff" stroke-width="1.3" stroke-linecap="round" stroke-linejoin="round" /></svg>
<svg style="left:211.85px;top:22.475px;" width="7.3" height="5.05" viewBox="0 0 7.3 5.05"><path d="M1.5 1.5 L3.65 3.55 L5.80 1.5" fill="none" stroke="#ffffff" stroke-width="1.25" stroke-linecap="round" stroke-linejoin="round"/></svg>
<svg style="left:228px;top:15px;" width="20" height="20" viewBox="0 0 20 20"><path d="M17 3.5 V8.5 H12 M16.7 8.3 C14.5 4.5 10 3.2 6.7 5.2 C3.2 7.4 3 12 5.7 14.6 L10.5 19" fill="none" stroke="#6fae8c" stroke-width="1.3" stroke-linecap="round" stroke-linejoin="round" /></svg>
<svg style="left:250.85px;top:22.475px;" width="7.3" height="5.05" viewBox="0 0 7.3 5.05"><path d="M1.5 1.5 L3.65 3.55 L5.80 1.5" fill="none" stroke="#6fae8c" stroke-width="1.25" stroke-linecap="round" stroke-linejoin="round"/></svg>
<svg style="left:267px;top:15px;" width="20" height="20" viewBox="0 0 20 20"><path d="M2.3 3.5 V8.3 H5.2 M17.7 3.5 V8.3 H14.8" fill="none" stroke="#ffffff" stroke-width="1.2" stroke-linecap="round" stroke-linejoin="round" /><path d="M7.2 2.3 H12.8 V8.6 L10 11.2 L7.2 8.6 Z" fill="#ffffff"/><path d="M10 18.3 V12.8 M7.6 15 L10 12.6 L12.4 15" fill="none" stroke="#ffffff" stroke-width="1.2" stroke-linecap="round" stroke-linejoin="round" /></svg>
<svg style="left:296px;top:15px;" width="20" height="20" viewBox="0 0 20 20"><path d="M3 2.8 H8.6 V5.4 M3 17.2 H8.6 V14.6" fill="none" stroke="#ffffff" stroke-width="1.2" stroke-linecap="round" stroke-linejoin="round" /><path d="M2.4 7.2 H8.2 L10.8 10 L8.2 12.8 H2.4 Z" fill="#ffffff"/><path d="M18.3 10 H12.2 M14.6 7.6 L12.2 10 L14.6 12.4" fill="none" stroke="#ffffff" stroke-width="1.2" stroke-linecap="round" stroke-linejoin="round" /></svg>
<svg style="left:325px;top:15px;" width="20" height="20" viewBox="0 0 20 20"><path d="M2.3 3.5 V8.3 H5.2 M17.7 3.5 V8.3 H14.8" fill="none" stroke="#ffffff" stroke-width="1.2" stroke-linecap="round" stroke-linejoin="round" /><path d="M7.2 2.3 H12.8 V8.6 L10 11.2 L7.2 8.6 Z" fill="#ffffff"/><path d="M7.8 13.8 L12.2 18.2 M12.2 13.8 L7.8 18.2" fill="none" stroke="#ffffff" stroke-width="1.2" stroke-linecap="round" stroke-linejoin="round" /></svg>
<svg style="left:353px;top:15px;" width="20" height="20" viewBox="0 0 20 20"><path d="M3 2.8 H8.6 V5.4 M3 17.2 H8.6 V14.6" fill="none" stroke="#ffffff" stroke-width="1.2" stroke-linecap="round" stroke-linejoin="round" /><path d="M2.4 7.2 H8.2 L10.8 10 L8.2 12.8 H2.4 Z" fill="#ffffff"/><path d="M13.6 7.8 L18 12.2 M18 7.8 L13.6 12.2" fill="none" stroke="#ffffff" stroke-width="1.2" stroke-linecap="round" stroke-linejoin="round" /></svg>
<svg style="left:383px;top:15px;" width="20" height="20" viewBox="0 0 20 20"><path d="M2.5 2.5 H17.5 V17.5 H2.5 Z" fill="none" stroke="#ffffff" stroke-width="1.2" stroke-linecap="round" stroke-linejoin="round" /><path d="M5 5.2 H8 M10 5.2 H15.5 M5 8.5 H8.5 V15 H5 Z M11 13.5 H15.5 V9.5 M11 13.5 L12.8 11.8 M11 13.5 L12.8 15.2" fill="none" stroke="#ffffff" stroke-width="1.1" stroke-linecap="round" stroke-linejoin="round" /></svg>
<svg style="left:411px;top:15px;" width="20" height="20" viewBox="0 0 20 20"><path d="M6 4.5 H2.5 V17.5 H9 M12 4.5 H15.5 V8" fill="none" stroke="#ffffff" stroke-width="1.2" stroke-linecap="round" stroke-linejoin="round" /><path d="M6 6.5 V3.5 H7.5 V2 H10.5 V3.5 H12 V6.5 Z" fill="none" stroke="#ffffff" stroke-width="1.1" stroke-linecap="round" stroke-linejoin="round" /><path d="M9.5 9.5 H17.5 V17.5 H9.5 Z" fill="none" stroke="#ffffff" stroke-width="1.2" stroke-linecap="round" stroke-linejoin="round" /></svg>
<svg style="left:432.35px;top:21.975px;" width="7.3" height="5.05" viewBox="0 0 7.3 5.05"><path d="M1.5 1.5 L3.65 3.55 L5.80 1.5" fill="none" stroke="#ffffff" stroke-width="1.25" stroke-linecap="round" stroke-linejoin="round"/></svg>
<svg style="left:452px;top:18px;" width="14" height="12" viewBox="0 0 14 12"><path d="M3.7 3.9 H10.3" fill="none" stroke="#ffffff" stroke-width="1.2" stroke-linecap="round" stroke-linejoin="round" /><path d="M3.9 6.6 L7 9.4 L10.1 6.6" fill="none" stroke="#ffffff" stroke-width="1.2" stroke-linecap="round" stroke-linejoin="round" /></svg>
<div class="t" id="t647" style="top:18.07px;font-size:12.2px;line-height:16px;height:16px;color:#fff;letter-spacing:-0.300px;transform:scaleX(0.9490);transform-origin:0 50%;left:487px;">Jama2BAdvisor25B525E125B9...</div>
<svg style="left:656.51px;top:22.32px;" width="10.98" height="6.36" viewBox="0 0 10.98 6.36"><path d="M1.5 1.5 L5.49 4.86 L9.48 1.5" fill="none" stroke="#ffffff" stroke-width="1.3" stroke-linecap="round" stroke-linejoin="round"/></svg>
<div style="left:702px;top:9px;width:368px;height:32px;border-radius:4px;background:#d3e6dc;"></div>
<svg style="left:714px;top:15px;" width="18" height="18" viewBox="0 0 18 18"><circle cx="10.8" cy="6.8" r="4.6" fill="none" stroke="#2b5a43" stroke-width="1.2"/><path d="M7.5 10.2 L2.5 15.5" fill="none" stroke="#2b5a43" stroke-width="1.3" stroke-linecap="round" stroke-linejoin="round" /></svg>
<div class="t" id="t648" style="top:18.17px;font-size:12.2px;line-height:16px;height:16px;color:#2b5a43;letter-spacing:-0.025px;left:744px;">Search</div>
<svg style="left:1581px;top:19px;" width="12" height="12" viewBox="0 0 12 12"><path d="M3 5.5 H9" fill="none" stroke="#ffffff" stroke-width="1.1" stroke-linecap="round" stroke-linejoin="round" /></svg>
<svg style="left:1627px;top:19px;" width="12" height="12" viewBox="0 0 12 12"><rect x="1.2" y="1.2" width="9.6" height="9.6" rx="1.3" fill="none" stroke="#fff" stroke-width="1.1"/></svg>
<svg style="left:1675px;top:19px;" width="12" height="12" viewBox="0 0 12 12"><path d="M1 1 L11 11 M11 1 L1 11" fill="none" stroke="#ffffff" stroke-width="1.1" stroke-linecap="round" stroke-linejoin="round" /></svg>
<div style="left:0px;top:49px;width:1706px;height:31px;background:#e7ebee;"></div>
<div class="t" id="t649" style="top:56.83px;font-size:12.6px;line-height:16px;height:16px;color:#242424;letter-spacing:-0.300px;transform:scaleX(0.9538);transform-origin:0 50%;left:23px;">File</div>
<div class="t" id="t650" style="top:56.83px;font-size:12.6px;line-height:16px;height:16px;color:#1a1a1a;font-weight:700;letter-spacing:0.500px;left:68.5px;">Home</div>
<div class="t" id="t651" style="top:56.83px;font-size:12.6px;line-height:16px;height:16px;color:#242424;letter-spacing:0.100px;left:125px;">Insert</div>
<div class="t" id="t652" style="top:56.83px;font-size:12.6px;line-height:16px;height:16px;color:#242424;letter-spacing:0.027px;left:180px;">Page Layout</div>
<div class="t" id="t653" style="top:56.83px;font-size:12.6px;line-height:16px;height:16px;color:#242424;letter-spacing:0.074px;left:273px;">Formulas</div>
<div class="t" id="t654" style="top:56.83px;font-size:12.6px;line-height:16px;height:16px;color:#242424;letter-spacing:-0.036px;left:347px;">Data</div>
<div class="t" id="t655" style="top:56.83px;font-size:12.6px;line-height:16px;height:16px;color:#242424;letter-spacing:-0.259px;left:395px;">Review</div>
<div class="t" id="t656" style="top:56.83px;font-size:12.6px;line-height:16px;height:16px;color:#242424;letter-spacing:-0.099px;left:455px;">View</div>
<div class="t" id="t657" style="top:56.83px;font-size:12.6px;line-height:16px;height:16px;color:#242424;letter-spacing:0.228px;left:504px;">Automate</div>
<div class="t" id="t658" style="top:56.83px;font-size:12.6px;line-height:16px;height:16px;color:#242424;letter-spacing:0.198px;left:582px;">Help</div>
<div style="left:68.5px;top:74px;width:36.5px;height:2.4px;border-radius:1.2px;background:#107c41;"></div>
<div style="left:1524px;top:52px;width:90px;height:23.6px;border:1px solid #8c8c8c;border-radius:4px;background:#fdfdfd;"></div>
<svg style="left:1529px;top:57.5px;" width="14" height="14" viewBox="0 0 14 14"><path d="M1.5 2.5 H11.5 V9.5 H5.5 L3 12 V9.5 H1.5 Z" fill="none" stroke="#333" stroke-width="1.1" stroke-linecap="round" stroke-linejoin="round" /></svg>
<div class="t" id="t659" style="top:56.93px;font-size:12.6px;line-height:16px;height:16px;color:#242424;letter-spacing:0.016px;left:1545.6px;">Comments</div>
<div style="left:1622px;top:52px;width:71px;height:23.6px;border-radius:4px;background:#107c41;"></div>
<svg style="left:1626px;top:57.5px;" width="14" height="14" viewBox="0 0 14 14"><path d="M5.5 4.5 H2.5 V12 H11.5 V9.5 M5 9 C5 6 7 4.8 9.5 4.8 M8 2.2 L10.8 4.8 L8 7.4" fill="none" stroke="#fff" stroke-width="1.1" stroke-linecap="round" stroke-linejoin="round" /></svg>
<div class="t" id="t660" style="top:56.93px;font-size:12.6px;line-height:16px;height:16px;color:#fff;letter-spacing:-0.277px;left:1643px;">Share</div>
<svg style="left:1681.55px;top:61.975px;" width="7.3" height="5.05" viewBox="0 0 7.3 5.05"><path d="M1.5 1.5 L3.65 3.55 L5.80 1.5" fill="none" stroke="#fff" stroke-width="1.25" stroke-linecap="round" stroke-linejoin="round"/></svg>
<div style="left:9px;top:79px;width:1688px;height:99.8px;border-radius:8px;background:#ffffff;box-shadow:0 1.5px 4px rgba(40,60,80,0.22),0 0 1px rgba(0,0,0,0.10);"></div>
<svg style="left:29px;top:86px;" width="32" height="34" viewBox="0 0 32 34"><path d="M6.5 6.8 H3 V28.4 H14" fill="none" stroke="#f07c1a" stroke-width="1.4"/><path d="M19 6.8 H22.3 V12.5" fill="none" stroke="#f07c1a" stroke-width="1.4"/><path d="M4.4 8 V27 H14" fill="none" stroke="#ffd56b" stroke-width="1.4"/><rect x="5.2" y="7.6" width="16.2" height="19" fill="#f5f5f7"/><path d="M6.6 9.4 V5.8 H8.6 C9.5 1.8 15.5 1.8 16.4 5.8 H18.4 V9.4 Z" fill="#ffffff" stroke="#6a6a6a" stroke-width="1.1" stroke-linejoin="round"/><rect x="15.7" y="14.7" width="12.6" height="16.6" fill="#f4f4f6" stroke="#333" stroke-width="1.2"/></svg>
<div class="t" style="top:122.11px;font-size:12.1px;line-height:16px;height:16px;color:#242424;letter-spacing:-0.300px;transform:scaleX(0.9416);transform-origin:50% 50%;left:-258px;width:600px;text-align:center;text-indent:-0.300px;"><span id="t661">Paste</span></div>
<svg style="left:37.95px;top:143.075px;" width="7.3" height="5.05" viewBox="0 0 7.3 5.05"><path d="M1.5 1.5 L3.65 3.55 L5.80 1.5" fill="none" stroke="#444" stroke-width="1.25" stroke-linecap="round" stroke-linejoin="round"/></svg>
<svg style="left:70px;top:86px;" width="14" height="18" viewBox="0 0 14 18"><path d="M4.2 1.5 L9.3 12 M9.8 1.5 L4.7 12" fill="none" stroke="#3a3a3a" stroke-width="1.1" stroke-linecap="round" stroke-linejoin="round" /><circle cx="3.8" cy="14.2" r="2" fill="none" stroke="#2e8bd8" stroke-width="1.1"/><circle cx="10.2" cy="14.2" r="2" fill="none" stroke="#2e8bd8" stroke-width="1.1"/></svg>
<div class="t" id="t662" style="top:88.11px;font-size:12.1px;line-height:16px;height:16px;color:#242424;letter-spacing:-0.164px;left:89.4px;">Cut</div>
<svg style="left:68px;top:111px;" width="18" height="18" viewBox="0 0 18 18"><path d="M4.5 3.8 V1.5 H1.5 V13.5 H4.5" fill="none" stroke="#3a3a3a" stroke-width="1.1" stroke-linecap="round" stroke-linejoin="round" /><path d="M5.5 3.5 H11.5 L15.5 7.5 V16.5 H5.5 Z" fill="none" stroke="#3a3a3a" stroke-width="1.1" stroke-linecap="round" stroke-linejoin="round" /><path d="M11.5 3.5 V7.5 H15.5 M8 10.5 H13 M8 13 H13" fill="none" stroke="#3a3a3a" stroke-width="1" stroke-linecap="round" stroke-linejoin="round" /></svg>
<div class="t" id="t663" style="top:114.41px;font-size:12.1px;line-height:16px;height:16px;color:#242424;letter-spacing:-0.345px;left:89.4px;">Copy</div>
<svg style="left:129.04999999999998px;top:119.475px;" width="7.3" height="5.05" viewBox="0 0 7.3 5.05"><path d="M1.5 1.5 L3.65 3.55 L5.80 1.5" fill="none" stroke="#444" stroke-width="1.25" stroke-linecap="round" stroke-linejoin="round"/></svg>
<svg style="left:69px;top:138px;" width="18" height="17" viewBox="0 0 18 17"><path d="M1.5 9.5 L7.5 15.5 L10.5 12 L5.5 7 Z" fill="#fbe6cc" stroke="#e8912d" stroke-width="1.1" stroke-linejoin="round"/><path d="M3.5 11.5 L6 14 " fill="none" stroke="#e8912d" stroke-width="1" stroke-linecap="round" stroke-linejoin="round" /><path d="M6.5 6.5 L11 11 L13 9 L8.5 4.5 Z M10.8 6.8 L15 2.6 C16 1.6 14.5 0.3 13.6 1.3 L9.6 5.6" fill="none" stroke="#3a3a3a" stroke-width="1.1" stroke-linecap="round" stroke-linejoin="round" /></svg>
<div class="t" id="t664" style="top:140.11px;font-size:12.1px;line-height:16px;height:16px;color:#242424;letter-spacing:-0.199px;left:89.4px;">Format Painter</div>
<div class="t" style="top:161.71px;font-size:11.8px;line-height:15px;height:15px;color:#2b2b2b;letter-spacing:-0.062px;left:-209.5px;width:600px;text-align:center;text-indent:-0.062px;"><span id="t665">Clipboard</span></div>
<svg style="left:171.5px;top:165px;" width="9" height="9" viewBox="0 0 9 9"><path d="M1 3.8 V1 H3.8 M3.4 3.4 L7.6 7.6 M7.7 4.2 V7.7 H4.2" fill="none" stroke="#333" stroke-width="1.05" stroke-linecap="round" stroke-linejoin="round" /></svg>
<div style="left:183px;top:84px;width:1px;height:89px;background:#d4d4d4;"></div>
<div style="left:192px;top:91px;width:122.5px;height:23.5px;border:1px solid #8c8c8c;border-radius:4px;background:#fff;"></div>
<div class="t" id="t666" style="top:95.11px;font-size:12.1px;line-height:16px;height:16px;color:#242424;letter-spacing:-0.130px;left:195.3px;">Calibri</div>
<svg style="left:304.15000000000003px;top:100.975px;" width="7.3" height="5.05" viewBox="0 0 7.3 5.05"><path d="M1.5 1.5 L3.65 3.55 L5.80 1.5" fill="none" stroke="#333" stroke-width="1.25" stroke-linecap="round" stroke-linejoin="round"/></svg>
<div style="left:317px;top:91px;width:42.5px;height:23.5px;border:1px solid #8c8c8c;border-radius:4px;background:#fff;"></div>
<div class="t" id="t667" style="top:95.11px;font-size:12.1px;line-height:16px;height:16px;color:#242424;left:320.2px;">11</div>
<svg style="left:349.35px;top:100.975px;" width="7.3" height="5.05" viewBox="0 0 7.3 5.05"><path d="M1.5 1.5 L3.65 3.55 L5.80 1.5" fill="none" stroke="#333" stroke-width="1.25" stroke-linecap="round" stroke-linejoin="round"/></svg>
<div class="t" id="t668" style="top:92.08px;font-size:16.5px;line-height:21px;height:21px;color:#3a3a3a;letter-spacing:0.000px;left:366.5px;">A</div>
<svg style="left:377px;top:94.5px;" width="7" height="5" viewBox="0 0 7 5"><path d="M1.2 3.6 L3.4 1.3 L5.6 3.6" fill="none" stroke="#2e8bd8" stroke-width="1.25" stroke-linecap="round" stroke-linejoin="round" /></svg>
<div class="t" id="t669" style="top:94.32px;font-size:13.5px;line-height:18px;height:18px;color:#3a3a3a;letter-spacing:0.000px;left:393.7px;">A</div>
<svg style="left:402.5px;top:95px;" width="7" height="5" viewBox="0 0 7 5"><path d="M1.2 1.3 L3.4 3.6 L5.6 1.3" fill="none" stroke="#2e8bd8" stroke-width="1.25" stroke-linecap="round" stroke-linejoin="round" /></svg>
<div class="t" id="t670" style="top:125.22px;font-size:13.8px;line-height:18px;height:18px;color:#2b2b2b;font-weight:700;left:200.3px;">B</div>
<div class="t" id="t671" style="top:123.73px;font-size:15.2px;line-height:20px;height:20px;color:#2b2b2b;font-style:italic;font-family:'Liberation Serif',serif;left:227.2px;">I</div>
<div class="t" id="t672" style="top:125.83px;font-size:12.6px;line-height:16px;height:16px;color:#2b2b2b;letter-spacing:0.000px;left:251.3px;">U</div>
<div style="left:251px;top:140.6px;width:9px;height:1px;background:#2b2b2b;"></div>
<svg style="left:270.35px;top:132.475px;" width="7.3" height="5.05" viewBox="0 0 7.3 5.05"><path d="M1.5 1.5 L3.65 3.55 L5.80 1.5" fill="none" stroke="#444" stroke-width="1.25" stroke-linecap="round" stroke-linejoin="round"/></svg>
<div style="left:285px;top:125px;width:1px;height:21px;background:#d4d4d4;"></div>
<svg style="left:292px;top:127px;" width="15" height="16" viewBox="0 0 15 16"><g fill="#3a3a3a" shape-rendering="crispEdges"><rect x="0" y="0" width="1" height="1"/><rect x="0" y="7" width="1" height="1"/><rect x="2" y="0" width="1" height="1"/><rect x="2" y="7" width="1" height="1"/><rect x="4" y="0" width="1" height="1"/><rect x="4" y="7" width="1" height="1"/><rect x="6" y="0" width="1" height="1"/><rect x="6" y="7" width="1" height="1"/><rect x="8" y="0" width="1" height="1"/><rect x="8" y="7" width="1" height="1"/><rect x="10" y="0" width="1" height="1"/><rect x="10" y="7" width="1" height="1"/><rect x="12" y="0" width="1" height="1"/><rect x="12" y="7" width="1" height="1"/><rect x="14" y="0" width="1" height="1"/><rect x="14" y="7" width="1" height="1"/><rect x="0" y="0" width="1" height="1"/><rect x="7" y="0" width="1" height="1"/><rect x="14" y="0" width="1" height="1"/><rect x="0" y="2" width="1" height="1"/><rect x="7" y="2" width="1" height="1"/><rect x="14" y="2" width="1" height="1"/><rect x="0" y="4" width="1" height="1"/><rect x="7" y="4" width="1" height="1"/><rect x="14" y="4" width="1" height="1"/><rect x="0" y="6" width="1" height="1"/><rect x="7" y="6" width="1" height="1"/><rect x="14" y="6" width="1" height="1"/><rect x="0" y="8" width="1" height="1"/><rect x="7" y="8" width="1" height="1"/><rect x="14" y="8" width="1" height="1"/><rect x="0" y="10" width="1" height="1"/><rect x="7" y="10" width="1" height="1"/><rect x="14" y="10" width="1" height="1"/><rect x="0" y="12" width="1" height="1"/><rect x="7" y="12" width="1" height="1"/><rect x="14" y="12" width="1" height="1"/></g><rect x="0" y="13.6" width="15" height="1.4" fill="#1a1a1a"/></svg>
<svg style="left:314.35px;top:132.475px;" width="7.3" height="5.05" viewBox="0 0 7.3 5.05"><path d="M1.5 1.5 L3.65 3.55 L5.80 1.5" fill="none" stroke="#444" stroke-width="1.25" stroke-linecap="round" stroke-linejoin="round"/></svg>
<div style="left:329px;top:125px;width:1px;height:21px;background:#d4d4d4;"></div>
<svg style="left:336px;top:124px;" width="17" height="21" viewBox="0 0 17 21"><path d="M5 8.2 L9.2 2.5 L13.2 6.5 L8.2 11.8 Z" fill="none" stroke="#3a3a3a" stroke-width="1.1" stroke-linecap="round" stroke-linejoin="round" /><path d="M9.2 2.5 L8.2 1.2 M4.2 9.2 L7.5 12.5" fill="none" stroke="#3a3a3a" stroke-width="1" stroke-linecap="round" stroke-linejoin="round" /><path d="M13.6 7.5 C14.6 9 15.2 10 14.4 10.8 C13.6 11.4 12.8 10.6 13 9.6 Z" fill="#2e8bd8"/><rect x="0.5" y="14.8" width="15.5" height="4.2" fill="#ffeb00"/></svg>
<svg style="left:358.35px;top:132.475px;" width="7.3" height="5.05" viewBox="0 0 7.3 5.05"><path d="M1.5 1.5 L3.65 3.55 L5.80 1.5" fill="none" stroke="#444" stroke-width="1.25" stroke-linecap="round" stroke-linejoin="round"/></svg>
<div class="t" id="t673" style="top:122.29px;font-size:15.6px;line-height:20px;height:20px;color:#3a3a3a;left:379.5px;">A</div>
<div style="left:377px;top:139px;width:16px;height:4px;background:#ff0000;"></div>
<svg style="left:399.35px;top:132.475px;" width="7.3" height="5.05" viewBox="0 0 7.3 5.05"><path d="M1.5 1.5 L3.65 3.55 L5.80 1.5" fill="none" stroke="#444" stroke-width="1.25" stroke-linecap="round" stroke-linejoin="round"/></svg>
<div class="t" style="top:161.71px;font-size:11.8px;line-height:15px;height:15px;color:#2b2b2b;letter-spacing:-0.036px;left:-6px;width:600px;text-align:center;text-indent:-0.036px;"><span id="t674">Font</span></div>
<svg style="left:407.5px;top:165px;" width="9" height="9" viewBox="0 0 9 9"><path d="M1 3.8 V1 H3.8 M3.4 3.4 L7.6 7.6 M7.7 4.2 V7.7 H4.2" fill="none" stroke="#333" stroke-width="1.05" stroke-linecap="round" stroke-linejoin="round" /></svg>
<div style="left:420px;top:84px;width:1px;height:89px;background:#d4d4d4;"></div>
<div style="left:428px;top:91px;width:24px;height:23.5px;border:1px solid #9a9a9a;border-radius:4px;background:#e6e6e6;"></div>
<div style="left:428px;top:123px;width:24px;height:23.5px;border:1px solid #9a9a9a;border-radius:4px;background:#e6e6e6;"></div>
<svg style="left:432.7px;top:93.8px;" width="14.6" height="20" viewBox="0 0 14.6 20"><path d="M0.0 0.5 H14.6" stroke="#3a3a3a" stroke-width="1.15" fill="none"/><path d="M2.6 5.0 H12.0" stroke="#3a3a3a" stroke-width="1.15" fill="none"/><path d="M0.0 9.5 H14.6" stroke="#3a3a3a" stroke-width="1.15" fill="none"/></svg>
<svg style="left:458.7px;top:97.6px;" width="14.6" height="20" viewBox="0 0 14.6 20"><path d="M0.0 0.5 H14.6" stroke="#3a3a3a" stroke-width="1.15" fill="none"/><path d="M2.6 4.9 H12.0" stroke="#3a3a3a" stroke-width="1.15" fill="none"/><path d="M0.0 9.3 H14.6" stroke="#3a3a3a" stroke-width="1.15" fill="none"/></svg>
<svg style="left:484.7px;top:102px;" width="14.6" height="20" viewBox="0 0 14.6 20"><path d="M0.0 0.5 H14.6" stroke="#3a3a3a" stroke-width="1.15" fill="none"/><path d="M2.6 4.7 H12.0" stroke="#3a3a3a" stroke-width="1.15" fill="none"/><path d="M0.0 8.9 H14.6" stroke="#3a3a3a" stroke-width="1.15" fill="none"/></svg>
<div style="left:506px;top:93px;width:1px;height:21px;background:#d4d4d4;"></div>
<svg style="left:512px;top:93px;" width="19" height="19" viewBox="0 0 19 19"><path d="M5.7 16.4 L16.6 6.8 M12.6 6.2 L16.9 6.5 L16.4 10.8" fill="none" stroke="#2e8bd8" stroke-width="1.25" stroke-linecap="round" stroke-linejoin="round" /></svg>
<div class="t" id="t675" style="top:95.79px;font-size:11px;line-height:14px;height:14px;color:#3a3a3a;left:518.2px;transform:rotate(-40deg);transform-origin:left bottom;">ab</div>
<svg style="left:533.65px;top:100.975px;" width="7.3" height="5.05" viewBox="0 0 7.3 5.05"><path d="M1.5 1.5 L3.65 3.55 L5.80 1.5" fill="none" stroke="#444" stroke-width="1.25" stroke-linecap="round" stroke-linejoin="round"/></svg>
<div style="left:565.5px;top:89px;width:1px;height:62px;background:#d4d4d4;"></div>
<div style="left:572px;top:91px;width:85px;height:23.5px;border:1px solid #9a9a9a;border-radius:4px;background:#e6e6e6;"></div>
<div class="t" id="t676" style="top:92.26px;font-size:10.8px;line-height:14px;height:14px;color:#3a3a3a;letter-spacing:-0.016px;left:578.4px;">ab</div>
<div class="t" id="t677" style="top:99.46px;font-size:10.8px;line-height:14px;height:14px;color:#3a3a3a;left:579px;">c</div>
<svg style="left:584px;top:100.5px;" width="10" height="10" viewBox="0 0 10 10"><path d="M7.6 1.6 C9.6 2.6 9.2 6.6 6.2 6.4 H1.8 M3.9 4.2 L1.6 6.4 L3.9 8.6" fill="none" stroke="#2e8bd8" stroke-width="1.15" stroke-linecap="round" stroke-linejoin="round" /></svg>
<div class="t" id="t678" style="top:95.61px;font-size:12.1px;line-height:16px;height:16px;color:#242424;letter-spacing:-0.300px;transform:scaleX(0.9591);transform-origin:0 50%;left:596.6px;">Wrap Text</div>
<svg style="left:432.7px;top:127.7px;" width="14.6" height="20" viewBox="0 0 14.6 20"><path d="M0.0 0.5 H14.6" stroke="#3a3a3a" stroke-width="1.15" fill="none"/><path d="M0.0 4.7 H9.6" stroke="#3a3a3a" stroke-width="1.15" fill="none"/><path d="M0.0 8.9 H14.6" stroke="#3a3a3a" stroke-width="1.15" fill="none"/><path d="M0.0 13.1 H9.6" stroke="#3a3a3a" stroke-width="1.15" fill="none"/></svg>
<svg style="left:458.7px;top:127.7px;" width="14.6" height="20" viewBox="0 0 14.6 20"><path d="M0.0 0.5 H14.6" stroke="#3a3a3a" stroke-width="1.15" fill="none"/><path d="M2.5 4.7 H12.1" stroke="#3a3a3a" stroke-width="1.15" fill="none"/><path d="M0.0 8.9 H14.6" stroke="#3a3a3a" stroke-width="1.15" fill="none"/><path d="M2.5 13.1 H12.1" stroke="#3a3a3a" stroke-width="1.15" fill="none"/></svg>
<svg style="left:484.7px;top:127.7px;" width="14.6" height="20" viewBox="0 0 14.6 20"><path d="M0.0 0.5 H14.6" stroke="#3a3a3a" stroke-width="1.15" fill="none"/><path d="M5.0 4.7 H14.6" stroke="#3a3a3a" stroke-width="1.15" fill="none"/><path d="M0.0 8.9 H14.6" stroke="#3a3a3a" stroke-width="1.15" fill="none"/><path d="M5.0 13.1 H14.6" stroke="#3a3a3a" stroke-width="1.15" fill="none"/></svg>
<div style="left:506px;top:125px;width:1px;height:21px;background:#d4d4d4;"></div>
<svg style="left:513px;top:127px;" width="16" height="16" viewBox="0 0 16 16"><path d="M0.5 1.5 H15 M8 5.5 H15 M8 9.5 H15 M0.5 13.5 H15" fill="none" stroke="#3a3a3a" stroke-width="1.05" stroke-linecap="round" stroke-linejoin="round" /><path d="M6 7.5 H0.8 M3 5.2 L0.8 7.5 L3 9.8" fill="none" stroke="#2e8bd8" stroke-width="1.1" stroke-linecap="round" stroke-linejoin="round" /></svg>
<svg style="left:539px;top:127px;" width="16" height="16" viewBox="0 0 16 16"><path d="M0.5 1.5 H15 M8 5.5 H15 M8 9.5 H15 M0.5 13.5 H15" fill="none" stroke="#3a3a3a" stroke-width="1.05" stroke-linecap="round" stroke-linejoin="round" /><path d="M0.8 7.5 H6 M3.8 5.2 L6 7.5 L3.8 9.8" fill="none" stroke="#2e8bd8" stroke-width="1.1" stroke-linecap="round" stroke-linejoin="round" /></svg>
<svg style="left:575.5px;top:126.5px;" width="16" height="16" viewBox="0 0 16 16"><rect x="0.6" y="0.6" width="14.6" height="14.6" fill="#fff" stroke="#2a2a2a" stroke-width="1.15"/><path d="M0.6 3.6 H15.2 M0.6 12.2 H15.2 M7.9 0.6 V3.6 M7.9 12.2 V15.2" stroke="#2a2a2a" stroke-width="1" fill="none"/><rect x="1.2" y="4.2" width="13.4" height="7.4" fill="#fff" stroke="#2e8bd8" stroke-width="1"/><path d="M3.2 7.9 H12.6 M5 6.1 L3.2 7.9 L5 9.7 M10.8 6.1 L12.6 7.9 L10.8 9.7" fill="none" stroke="#2e8bd8" stroke-width="1.1" stroke-linecap="round" stroke-linejoin="round" /></svg>
<div class="t" id="t679" style="top:128.11px;font-size:12.1px;line-height:16px;height:16px;color:#242424;letter-spacing:-0.067px;left:596.6px;">Merge &amp; Center</div>
<svg style="left:692.75px;top:132.475px;" width="7.3" height="5.05" viewBox="0 0 7.3 5.05"><path d="M1.5 1.5 L3.65 3.55 L5.80 1.5" fill="none" stroke="#444" stroke-width="1.25" stroke-linecap="round" stroke-linejoin="round"/></svg>
<div class="t" style="top:161.71px;font-size:11.8px;line-height:15px;height:15px;color:#2b2b2b;letter-spacing:0.004px;left:258.20000000000005px;width:600px;text-align:center;text-indent:0.004px;"><span id="t680">Alignment</span></div>
<svg style="left:701.5px;top:165px;" width="9" height="9" viewBox="0 0 9 9"><path d="M1 3.8 V1 H3.8 M3.4 3.4 L7.6 7.6 M7.7 4.2 V7.7 H4.2" fill="none" stroke="#333" stroke-width="1.05" stroke-linecap="round" stroke-linejoin="round" /></svg>
<div style="left:714px;top:84px;width:1px;height:89px;background:#d4d4d4;"></div>
<div style="left:722px;top:91px;width:146px;height:23.5px;border:1px solid #8c8c8c;border-radius:4px;background:#fff;"></div>
<div class="t" id="t681" style="top:95.11px;font-size:12.1px;line-height:16px;height:16px;color:#242424;letter-spacing:-0.300px;transform:scaleX(0.9507);transform-origin:0 50%;left:725.5px;">General</div>
<svg style="left:857.75px;top:100.975px;" width="7.3" height="5.05" viewBox="0 0 7.3 5.05"><path d="M1.5 1.5 L3.65 3.55 L5.80 1.5" fill="none" stroke="#333" stroke-width="1.25" stroke-linecap="round" stroke-linejoin="round"/></svg>
<div class="t" id="t682" style="top:124.46px;font-size:16px;line-height:21px;height:21px;color:#3a3a3a;letter-spacing:0.000px;left:728.7px;">$</div>
<svg style="left:748.75px;top:132.475px;" width="7.3" height="5.05" viewBox="0 0 7.3 5.05"><path d="M1.5 1.5 L3.65 3.55 L5.80 1.5" fill="none" stroke="#444" stroke-width="1.25" stroke-linecap="round" stroke-linejoin="round"/></svg>
<div class="t" id="t683" style="top:123.96px;font-size:16px;line-height:21px;height:21px;color:#3a3a3a;letter-spacing:0.000px;left:767px;">%</div>
<svg style="left:795px;top:128px;" width="12" height="16" viewBox="0 0 12 16"><path d="M6.6 1.2 C9 1.2 10.6 3 10.6 5.6 C10.6 9.6 7.6 12.6 3.4 13.8 L3 12.8 C5.6 11.8 7.2 10 7.4 8 C4.8 8.6 3 7 3 4.8 C3 2.8 4.6 1.2 6.6 1.2 Z" fill="#333"/></svg>
<div style="left:815.5px;top:125px;width:1px;height:21px;background:#d4d4d4;"></div>
<svg style="left:821px;top:126px;" width="12" height="12" viewBox="0 0 12 12"><path d="M1.2 5.5 H9.6 M4.4 2.2 L1.1 5.5 L4.4 8.8" fill="none" stroke="#2a8fd0" stroke-width="1.35" stroke-linecap="round" stroke-linejoin="round" /></svg>
<div class="t" id="t684" style="top:124.17px;font-size:9.6px;line-height:12px;height:12px;color:#3a3a3a;left:832.8px;">0</div>
<div class="t" id="t685" style="top:132.37px;font-size:9.6px;line-height:12px;height:12px;color:#3a3a3a;letter-spacing:-0.300px;transform:scaleX(0.9573);transform-origin:0 50%;left:824.8px;">.00</div>
<div class="t" id="t686" style="top:124.17px;font-size:9.6px;line-height:12px;height:12px;color:#3a3a3a;letter-spacing:-0.300px;transform:scaleX(0.9573);transform-origin:0 50%;left:850.9px;">.00</div>
<div class="t" id="t687" style="top:132.37px;font-size:9.6px;line-height:12px;height:12px;color:#3a3a3a;letter-spacing:-0.300px;transform:scaleX(0.9332);transform-origin:0 50%;left:855.9px;">.0</div>
<svg style="left:847px;top:133px;" width="12" height="12" viewBox="0 0 12 12"><path d="M1.2 5.7 H9.4 M6.2 2.4 L9.5 5.7 L6.2 9" fill="none" stroke="#2a8fd0" stroke-width="1.35" stroke-linecap="round" stroke-linejoin="round" /></svg>
<div class="t" style="top:161.71px;font-size:11.8px;line-height:15px;height:15px;color:#2b2b2b;letter-spacing:-0.294px;left:486.70000000000005px;width:600px;text-align:center;text-indent:-0.294px;"><span id="t688">Number</span></div>
<svg style="left:863.5px;top:165px;" width="9" height="9" viewBox="0 0 9 9"><path d="M1 3.8 V1 H3.8 M3.4 3.4 L7.6 7.6 M7.7 4.2 V7.7 H4.2" fill="none" stroke="#333" stroke-width="1.05" stroke-linecap="round" stroke-linejoin="round" /></svg>
<div style="left:875.5px;top:84px;width:1px;height:89px;background:#d4d4d4;"></div>
<svg style="left:905px;top:89px;" width="32" height="26" viewBox="0 0 32 26"><path d="M2.2 2.1 H29.8 V23.700000000000003 H2.2 Z M7.7 2.1 V23.700000000000003 M13.2 2.1 V23.700000000000003 M18.8 2.1 V23.700000000000003 M24.3 2.1 V23.700000000000003 M2.2 9.3 H29.8 M2.2 16.5 H29.8 " fill="none" stroke="#3b3b3b" stroke-width="1"/><rect x="7.5" y="2.1" width="12.5" height="7.2" fill="#f2a0a6" stroke="#e8323c" stroke-width="1.1"/><rect x="7.5" y="16.5" width="13.5" height="7.2" fill="#f2a0a6" stroke="#e8323c" stroke-width="1.1"/><rect x="7.5" y="9.3" width="7.6" height="7.2" fill="#7db6ea" stroke="#2e8bd8" stroke-width="0.9"/><path d="M7.5 2.1 V23.7" stroke="#e8323c" stroke-width="1.1" fill="none"/></svg>
<div class="t" style="top:121.11px;font-size:12.1px;line-height:16px;height:16px;color:#242424;letter-spacing:0.098px;left:621px;width:600px;text-align:center;text-indent:0.098px;"><span id="t689">Conditional</span></div>
<div class="t" style="top:137.21px;font-size:12.1px;line-height:16px;height:16px;color:#242424;letter-spacing:0.021px;left:615.2px;width:600px;text-align:center;text-indent:0.021px;"><span id="t690">Formatting</span></div>
<svg style="left:948.5500000000001px;top:142.975px;" width="7.3" height="5.05" viewBox="0 0 7.3 5.05"><path d="M1.5 1.5 L3.65 3.55 L5.80 1.5" fill="none" stroke="#444" stroke-width="1.25" stroke-linecap="round" stroke-linejoin="round"/></svg>
<svg style="left:973px;top:87px;" width="36" height="34" viewBox="0 0 36 34"><path d="M2.3 4.1 H29.900000000000002 V25.700000000000003 H2.3 Z M11.5 4.1 V25.700000000000003 M20.7 4.1 V25.700000000000003 M2.3 11.3 H29.900000000000002 M2.3 18.5 H29.900000000000002 " fill="none" stroke="#3b3b3b" stroke-width="1"/><rect x="11.5" y="11.3" width="18.4" height="14.4" fill="#5ea8e6"/><path d="M11.5 11.3 H29.9 M11.5 18.5 H29.9 M11.5 11.3 V25.7 M20.7 11.3 V25.7 M29.9 11.3 V25.7 M11.5 25.7 H29.9" stroke="#2b7cc9" stroke-width="1" fill="none"/><path d="M31.4 11.8 L21.4 22.8" stroke="#ffffff" stroke-width="6" fill="none" stroke-linecap="round"/><path d="M31.6 11.6 L21.9 22.3" stroke="#3b3b3b" stroke-width="3.6" fill="none" stroke-linecap="round"/><path d="M31.5 11.7 L22 22.2" stroke="#ffffff" stroke-width="1.5" fill="none" stroke-linecap="round"/><path d="M19.4 21.8 L22.8 24.6 C22.4 28.2 17.4 31 10.2 30.4 C14.2 28.6 14.4 23 19.4 21.8 Z" fill="#4f9fe0" stroke="#2b7cc9" stroke-width="0.8" stroke-linejoin="round"/></svg>
<div class="t" style="top:121.11px;font-size:12.1px;line-height:16px;height:16px;color:#242424;letter-spacing:-0.330px;left:688.9px;width:600px;text-align:center;text-indent:-0.330px;"><span id="t691">Format as</span></div>
<div class="t" style="top:137.21px;font-size:12.1px;line-height:16px;height:16px;color:#242424;letter-spacing:-0.300px;transform:scaleX(0.9083);transform-origin:50% 50%;left:683.5px;width:600px;text-align:center;text-indent:-0.300px;"><span id="t692">Table</span></div>
<svg style="left:1000.35px;top:142.975px;" width="7.3" height="5.05" viewBox="0 0 7.3 5.05"><path d="M1.5 1.5 L3.65 3.55 L5.80 1.5" fill="none" stroke="#444" stroke-width="1.25" stroke-linecap="round" stroke-linejoin="round"/></svg>
<svg style="left:1026.8px;top:87px;" width="36" height="34" viewBox="0 0 36 34"><path d="M2.3 4.1 H29.900000000000002 V25.700000000000003 H2.3 Z M11.5 4.1 V25.700000000000003 M20.7 4.1 V25.700000000000003 M2.3 11.3 H29.900000000000002 M2.3 18.5 H29.900000000000002 " fill="none" stroke="#3b3b3b" stroke-width="1"/><rect x="8" y="8.6" width="16.8" height="11" fill="#8abfec" stroke="#2b7cc9" stroke-width="1.1"/><path d="M31.4 11.8 L21.4 22.8" stroke="#ffffff" stroke-width="6" fill="none" stroke-linecap="round"/><path d="M31.6 11.6 L21.9 22.3" stroke="#3b3b3b" stroke-width="3.6" fill="none" stroke-linecap="round"/><path d="M31.5 11.7 L22 22.2" stroke="#ffffff" stroke-width="1.5" fill="none" stroke-linecap="round"/><path d="M19.4 21.8 L22.8 24.6 C22.4 28.2 17.4 31 10.2 30.4 C14.2 28.6 14.4 23 19.4 21.8 Z" fill="#4f9fe0" stroke="#2b7cc9" stroke-width="0.8" stroke-linejoin="round"/></svg>
<div class="t" style="top:121.11px;font-size:12.1px;line-height:16px;height:16px;color:#242424;letter-spacing:-0.300px;transform:scaleX(0.9527);transform-origin:50% 50%;left:743.2px;width:600px;text-align:center;text-indent:-0.300px;"><span id="t693">Cell</span></div>
<div class="t" style="top:137.21px;font-size:12.1px;line-height:16px;height:16px;color:#242424;letter-spacing:-0.388px;left:737.8px;width:600px;text-align:center;text-indent:-0.388px;"><span id="t694">Styles</span></div>
<svg style="left:1055.6499999999999px;top:142.975px;" width="7.3" height="5.05" viewBox="0 0 7.3 5.05"><path d="M1.5 1.5 L3.65 3.55 L5.80 1.5" fill="none" stroke="#444" stroke-width="1.25" stroke-linecap="round" stroke-linejoin="round"/></svg>
<div class="t" style="top:161.71px;font-size:11.8px;line-height:15px;height:15px;color:#2b2b2b;letter-spacing:-0.300px;transform:scaleX(0.9241);transform-origin:50% 50%;left:674.5px;width:600px;text-align:center;text-indent:-0.300px;"><span id="t695">Styles</span></div>
<div style="left:1073.5px;top:84px;width:1px;height:89px;background:#d4d4d4;"></div>
<svg style="left:1085px;top:89px;" width="36" height="26" viewBox="0 0 36 26"><path d="M4.2 2.1 H32.2 V23.700000000000003 H4.2 Z M13.5 2.1 V23.700000000000003 M22.9 2.1 V23.700000000000003 M4.2 9.3 H32.2 M4.2 16.5 H32.2 " fill="none" stroke="#3b3b3b" stroke-width="1"/><rect x="13" y="8.3" width="21" height="9.2" fill="#ffffff"/><rect x="14.2" y="9.3" width="19.6" height="7.2" fill="#6fb1ea" stroke="#2b7cc9" stroke-width="1"/><path d="M23.6 9.3 V16.5" stroke="#2b7cc9" stroke-width="1"/><path d="M1 12.9 H14" stroke="#ffffff" stroke-width="8" fill="none"/><path d="M8.4 6.8 L2 12.9 L8.4 19" fill="none" stroke="#1f9aa0" stroke-width="1.3" stroke-linecap="round" stroke-linejoin="round" /><path d="M4.4 11 H15 M4.4 14.8 H15" fill="none" stroke="#1f9aa0" stroke-width="1.2" stroke-linecap="round" stroke-linejoin="round" /><path d="M5.6 12.9 H14.4" stroke="#ffffff" stroke-width="2.4"/></svg>
<div class="t" style="top:121.61px;font-size:12.1px;line-height:16px;height:16px;color:#242424;letter-spacing:-0.210px;left:802.4000000000001px;width:600px;text-align:center;text-indent:-0.210px;"><span id="t696">Insert</span></div>
<svg style="left:1098.75px;top:143.475px;" width="7.3" height="5.05" viewBox="0 0 7.3 5.05"><path d="M1.5 1.5 L3.65 3.55 L5.80 1.5" fill="none" stroke="#444" stroke-width="1.25" stroke-linecap="round" stroke-linejoin="round"/></svg>
<svg style="left:1131px;top:89px;" width="36" height="26" viewBox="0 0 36 26"><path d="M2.3 2.1 H30.1 V23.700000000000003 H2.3 Z M11.6 2.1 V23.700000000000003 M20.8 2.1 V23.700000000000003 M2.3 9.3 H30.1 M2.3 16.5 H30.1 " fill="none" stroke="#3b3b3b" stroke-width="1"/><rect x="1" y="8.1" width="33" height="9.6" fill="#ffffff"/><rect x="6" y="9.3" width="15.6" height="7.2" fill="#6fb1ea" stroke="#2b7cc9" stroke-width="1"/><path d="M13.8 9.3 V16.5" stroke="#2b7cc9" stroke-width="1"/><path d="M20.6 7.2 L31.2 18.6 M31.2 7.2 L20.6 18.6" fill="none" stroke="#f04a58" stroke-width="1.35" stroke-linecap="round" stroke-linejoin="round" /></svg>
<div class="t" style="top:121.61px;font-size:12.1px;line-height:16px;height:16px;color:#242424;letter-spacing:-0.394px;left:846.5px;width:600px;text-align:center;text-indent:-0.394px;"><span id="t697">Delete</span></div>
<svg style="left:1142.85px;top:143.475px;" width="7.3" height="5.05" viewBox="0 0 7.3 5.05"><path d="M1.5 1.5 L3.65 3.55 L5.80 1.5" fill="none" stroke="#444" stroke-width="1.25" stroke-linecap="round" stroke-linejoin="round"/></svg>
<svg style="left:1175px;top:85px;" width="32" height="30" viewBox="0 0 32 30"><path d="M2.4 6.1 H30.0 V27.700000000000003 H2.4 Z M11.6 6.1 V27.700000000000003 M20.8 6.1 V27.700000000000003 M2.4 13.3 H30.0 M2.4 20.5 H30.0 " fill="none" stroke="#3b3b3b" stroke-width="1"/><rect x="9.9" y="13.3" width="12.6" height="7.2" fill="#6fb1ea"/><path d="M9.9 6.1 V27.7 M22.5 6.1 V27.7 M9.9 13.3 H22.5 M9.9 20.5 H22.5" stroke="#2b7cc9" stroke-width="1.1" fill="none"/><path d="M8.6 2.6 H23.8 M8.6 1 V4.2 M23.8 1 V4.2" fill="none" stroke="#2e8bd8" stroke-width="1.1" stroke-linecap="round" stroke-linejoin="round" /></svg>
<div class="t" style="top:121.61px;font-size:12.1px;line-height:16px;height:16px;color:#242424;letter-spacing:-0.222px;left:891px;width:600px;text-align:center;text-indent:-0.222px;"><span id="t698">Format</span></div>
<svg style="left:1187.35px;top:143.475px;" width="7.3" height="5.05" viewBox="0 0 7.3 5.05"><path d="M1.5 1.5 L3.65 3.55 L5.80 1.5" fill="none" stroke="#444" stroke-width="1.25" stroke-linecap="round" stroke-linejoin="round"/></svg>
<div class="t" style="top:161.71px;font-size:11.8px;line-height:15px;height:15px;color:#2b2b2b;letter-spacing:-0.300px;transform:scaleX(0.9187);transform-origin:50% 50%;left:847px;width:600px;text-align:center;text-indent:-0.300px;"><span id="t699">Cells</span></div>
<div style="left:1220.5px;top:84px;width:1px;height:89px;background:#d4d4d4;"></div>
<svg style="left:1233px;top:88px;" width="16" height="16" viewBox="0 0 16 16"><path d="M13 3 V1.5 H2 L8 7.8 L2 14.2 H13 V12.7" fill="none" stroke="#3a3a3a" stroke-width="1.1" stroke-linecap="round" stroke-linejoin="round" /></svg>
<div class="t" id="t700" style="top:87.61px;font-size:12.1px;line-height:16px;height:16px;color:#242424;letter-spacing:-0.075px;left:1253.3px;">AutoSum</div>
<svg style="left:1314.6499999999999px;top:92.975px;" width="7.3" height="5.05" viewBox="0 0 7.3 5.05"><path d="M1.5 1.5 L3.65 3.55 L5.80 1.5" fill="none" stroke="#444" stroke-width="1.25" stroke-linecap="round" stroke-linejoin="round"/></svg>
<svg style="left:1232px;top:114px;" width="18" height="16" viewBox="0 0 18 16"><path d="M1.5 1.2 H16.5" fill="none" stroke="#3a3a3a" stroke-width="1.2" stroke-linecap="round" stroke-linejoin="round" /><path d="M1.5 3 H16.5 V14.5 H1.5 Z" fill="none" stroke="#3a3a3a" stroke-width="1.1" stroke-linecap="round" stroke-linejoin="round" /><path d="M9 5.5 V12 M6.3 9.5 L9 12.2 L11.7 9.5" fill="none" stroke="#2e8bd8" stroke-width="1.1" stroke-linecap="round" stroke-linejoin="round" /></svg>
<div class="t" id="t701" style="top:114.01px;font-size:12.1px;line-height:16px;height:16px;color:#242424;letter-spacing:-0.384px;left:1253.3px;">Fill</div>
<svg style="left:1270.85px;top:119.975px;" width="7.3" height="5.05" viewBox="0 0 7.3 5.05"><path d="M1.5 1.5 L3.65 3.55 L5.80 1.5" fill="none" stroke="#444" stroke-width="1.25" stroke-linecap="round" stroke-linejoin="round"/></svg>
<svg style="left:1232px;top:139px;" width="18" height="17" viewBox="0 0 18 17"><path d="M8.5 1.5 L15.5 8 L8.5 15 H5.5 L1.5 11 Z" fill="#f3d6f3" stroke="#b146c2" stroke-width="1.1" stroke-linejoin="round"/><path d="M4.5 8 L10.8 13 " stroke="#b146c2" stroke-width="1.1" fill="none"/><path d="M5.3 8.2 L1.8 11 L5.6 14.6 L9.9 12.5 Z" fill="#b146c2" opacity="0.55"/></svg>
<div class="t" id="t702" style="top:140.01px;font-size:12.1px;line-height:16px;height:16px;color:#242424;letter-spacing:-0.300px;transform:scaleX(0.9565);transform-origin:0 50%;left:1253.3px;">Clear</div>
<svg style="left:1282.35px;top:145.975px;" width="7.3" height="5.05" viewBox="0 0 7.3 5.05"><path d="M1.5 1.5 L3.65 3.55 L5.80 1.5" fill="none" stroke="#444" stroke-width="1.25" stroke-linecap="round" stroke-linejoin="round"/></svg>
<div class="t" id="t703" style="top:84.99px;font-size:15.6px;line-height:20px;height:20px;color:#2e8bd8;letter-spacing:0.000px;left:1336.6px;">A</div>
<div class="t" id="t704" style="top:99.19px;font-size:15.6px;line-height:20px;height:20px;color:#3a3a3a;letter-spacing:0.000px;left:1336.8px;">Z</div>
<svg style="left:1348px;top:93px;" width="18" height="18" viewBox="0 0 18 18"><path d="M1.5 2.5 H16.5 L11 9 V14.5 L7.5 16.5 V9 Z" fill="none" stroke="#3a3a3a" stroke-width="1.1" stroke-linecap="round" stroke-linejoin="round" /></svg>
<div class="t" style="top:121.11px;font-size:12.1px;line-height:16px;height:16px;color:#242424;letter-spacing:-0.142px;left:1051px;width:600px;text-align:center;text-indent:-0.142px;"><span id="t705">Sort &amp;</span></div>
<div class="t" style="top:137.21px;font-size:12.1px;line-height:16px;height:16px;color:#242424;letter-spacing:-0.175px;left:1045.6px;width:600px;text-align:center;text-indent:-0.175px;"><span id="t706">Filter</span></div>
<svg style="left:1360.85px;top:142.975px;" width="7.3" height="5.05" viewBox="0 0 7.3 5.05"><path d="M1.5 1.5 L3.65 3.55 L5.80 1.5" fill="none" stroke="#444" stroke-width="1.25" stroke-linecap="round" stroke-linejoin="round"/></svg>
<svg style="left:1380px;top:87px;" width="33" height="30" viewBox="0 0 33 30"><circle cx="20.5" cy="10.5" r="8.8" fill="none" stroke="#3a3a3a" stroke-width="1.1"/><path d="M14.2 16.8 L2.5 28.5" fill="none" stroke="#3a3a3a" stroke-width="1.2" stroke-linecap="round" stroke-linejoin="round" /></svg>
<div class="t" style="top:121.11px;font-size:12.1px;line-height:16px;height:16px;color:#242424;letter-spacing:-0.031px;left:1096.9px;width:600px;text-align:center;text-indent:-0.031px;"><span id="t707">Find &amp;</span></div>
<div class="t" style="top:137.21px;font-size:12.1px;line-height:16px;height:16px;color:#242424;letter-spacing:-0.300px;transform:scaleX(0.9494);transform-origin:50% 50%;left:1091.1px;width:600px;text-align:center;text-indent:-0.300px;"><span id="t708">Select</span></div>
<svg style="left:1409.6499999999999px;top:142.975px;" width="7.3" height="5.05" viewBox="0 0 7.3 5.05"><path d="M1.5 1.5 L3.65 3.55 L5.80 1.5" fill="none" stroke="#444" stroke-width="1.25" stroke-linecap="round" stroke-linejoin="round"/></svg>
<div class="t" style="top:161.71px;font-size:11.8px;line-height:15px;height:15px;color:#2b2b2b;letter-spacing:0.020px;left:1024.4px;width:600px;text-align:center;text-indent:0.020px;"><span id="t709">Editing</span></div>
<div style="left:1428.5px;top:84px;width:1px;height:89px;background:#d4d4d4;"></div>
<svg style="left:1453px;top:86px;" width="30" height="30" viewBox="0 0 30 30"><path d="M2.5 5.5 H18 V27.5 H2.5 Z" fill="#ececec" stroke="#c6c6c6" stroke-width="1"/><g transform="rotate(-45 17 12)"><rect x="6" y="8" width="22" height="8" rx="1.5" fill="#dcdcdc" stroke="#ffffff" stroke-width="1"/><rect x="9" y="10.5" width="8" height="3" rx="1.5" fill="none" stroke="#ffffff" stroke-width="0.9"/><rect x="22" y="6.5" width="5" height="11" fill="#d0d0d0" stroke="#ffffff" stroke-width="0.8"/></g></svg>
<div class="t" style="top:121.11px;font-size:12.1px;line-height:16px;height:16px;color:#b4b4b4;letter-spacing:-0.245px;left:1165.5px;width:600px;text-align:center;text-indent:-0.245px;"><span id="t710">Sensitivity</span></div>
<svg style="left:1461.9499999999998px;top:143.475px;" width="7.3" height="5.05" viewBox="0 0 7.3 5.05"><path d="M1.5 1.5 L3.65 3.55 L5.80 1.5" fill="none" stroke="#c0c0c0" stroke-width="1.25" stroke-linecap="round" stroke-linejoin="round"/></svg>
<div class="t" style="top:161.71px;font-size:11.8px;line-height:15px;height:15px;color:#2b2b2b;letter-spacing:-0.241px;left:1165.4px;width:600px;text-align:center;text-indent:-0.241px;"><span id="t711">Sensitivity</span></div>
<div style="left:1502.5px;top:84px;width:1px;height:89px;background:#d4d4d4;"></div>
<svg style="left:1519px;top:87px;" width="30" height="30" viewBox="0 0 30 30"><rect x="1" y="1" width="27.5" height="27" fill="#ffffff" stroke="#3a3a3a" stroke-width="1.1"/><rect x="1.5" y="1.5" width="26.5" height="3.2" fill="#c8c8c8"/><path d="M1 5.2 H28.5 M1 18 H28.5 M1 23 H28.5 M7.5 18 V28 M14.5 18 V28 M21.5 18 V28" stroke="#3a3a3a" stroke-width="1" fill="none"/><circle cx="14" cy="12.5" r="8.6" fill="#ffffff" stroke="#3a3a3a" stroke-width="1.1"/><circle cx="14" cy="12.5" r="6.4" fill="none" stroke="#9a9a9a" stroke-width="0.9"/><rect x="10" y="12" width="2.4" height="4.5" fill="#9a9a9a"/><rect x="12.8" y="9" width="2.6" height="7.5" fill="#2e8bd8"/><rect x="15.8" y="10.8" width="2.4" height="5.7" fill="#7db7ea"/><path d="M20.2 18.8 L28.5 27.5" fill="none" stroke="#3a3a3a" stroke-width="1.3" stroke-linecap="round" stroke-linejoin="round" /></svg>
<div class="t" style="top:121.11px;font-size:12.1px;line-height:16px;height:16px;color:#242424;letter-spacing:-0.405px;left:1233.7px;width:600px;text-align:center;text-indent:-0.405px;"><span id="t712">Analyze</span></div>
<div class="t" style="top:137.21px;font-size:12.1px;line-height:16px;height:16px;color:#242424;letter-spacing:-0.300px;transform:scaleX(0.9494);transform-origin:50% 50%;left:1233.7px;width:600px;text-align:center;text-indent:-0.300px;"><span id="t713">Data</span></div>
<div style="left:1564px;top:84px;width:1px;height:89px;background:#d4d4d4;"></div>
<svg style="left:1676.345px;top:162.14px;" width="12.31" height="6.92" viewBox="0 0 12.31 6.92"><path d="M1.5 1.5 L6.16 5.42 L10.81 1.5" fill="none" stroke="#333" stroke-width="1.3" stroke-linecap="round" stroke-linejoin="round"/></svg>
<div style="left:10px;top:188px;width:100px;height:24.5px;border-radius:4px;background:#fff;box-shadow:0 0 0 1px #dde1e4;"></div>
<div class="t" id="t714" style="top:191.73px;font-size:13.2px;line-height:17px;height:17px;color:#242424;left:16.2px;">B7</div>
<svg style="left:93.63499999999999px;top:197.92000000000002px;" width="11.93" height="6.76" viewBox="0 0 11.93 6.76"><path d="M1.5 1.5 L5.96 5.26 L10.43 1.5" fill="none" stroke="#333" stroke-width="1.3" stroke-linecap="round" stroke-linejoin="round"/></svg>
<div style="left:120px;top:195px;width:2.2px;height:2.2px;border-radius:0.6px;background:#333;"></div>
<div style="left:120px;top:199px;width:2.2px;height:2.2px;border-radius:0.6px;background:#333;"></div>
<div style="left:120px;top:203px;width:2.2px;height:2.2px;border-radius:0.6px;background:#333;"></div>
<div style="left:132px;top:188px;width:84px;height:24.5px;border-radius:4px;background:#fff;box-shadow:0 0 0 1px #dde1e4;"></div>
<svg style="left:138px;top:194px;" width="13" height="13" viewBox="0 0 13 13"><path d="M1.5 1.5 L11 11 M11 1.5 L1.5 11" fill="none" stroke="#b4b4b4" stroke-width="1.1" stroke-linecap="round" stroke-linejoin="round" /></svg>
<svg style="left:161px;top:194px;" width="14" height="13" viewBox="0 0 14 13"><path d="M1.5 7 L5 10.5 L12.5 2" fill="none" stroke="#b4b4b4" stroke-width="1.1" stroke-linecap="round" stroke-linejoin="round" /></svg>
<div class="t" id="t715" style="top:187.44px;font-size:17.5px;line-height:23px;height:23px;color:#2a2a2a;font-style:italic;font-family:'Liberation Serif',serif;left:185.6px;-webkit-text-stroke:0.35px #2a2a2a;">f</div>
<div class="t" id="t716" style="top:189.63px;font-size:15.5px;line-height:20px;height:20px;color:#2a2a2a;font-style:italic;font-family:'Liberation Serif',serif;left:191.6px;-webkit-text-stroke:0.35px #2a2a2a;">x</div>
<svg style="left:203.82999999999998px;top:197.66px;" width="11.739999999999998" height="6.68" viewBox="0 0 11.739999999999998 6.68"><path d="M1.5 1.5 L5.87 5.18 L10.24 1.5" fill="none" stroke="#777" stroke-width="1.3" stroke-linecap="round" stroke-linejoin="round"/></svg>
<div style="left:222px;top:188px;width:1474px;height:44px;border-radius:4px;background:#fff;box-shadow:0 0 0 1px #dde1e4;"></div>
<div class="t" style="left:0px;top:191.53px;font-size:13.2px;line-height:17px;height:17px;color:#1a1a1a;-webkit-text-stroke:0.12px #1a1a1a;"><span class="w" id="a717" style="left:231.70px;letter-spacing:-0.300px;transform:scaleX(0.9036);transform-origin:0 50%;">The</span><span class="w" id="a718" style="left:256.50px;letter-spacing:-0.033px;">system</span><span class="w" id="a719" style="left:302.90px;letter-spacing:0.269px;">shall</span><span class="w" id="a720" style="left:335.90px;letter-spacing:-0.372px;">be</span><span class="w" id="a721" style="left:355.00px;letter-spacing:0.649px;">built</span><span class="w" id="a722" style="left:386.60px;letter-spacing:-0.300px;transform:scaleX(0.9324);transform-origin:0 50%;">on</span><span class="w" id="a723" style="left:404.80px;letter-spacing:-0.072px;">top</span><span class="w" id="a724" style="left:427.80px;letter-spacing:0.300px;">of</span><span class="w" id="a725" style="left:442.83px;letter-spacing:0.000px;">a</span><span class="w" id="a726" style="left:453.90px;letter-spacing:0.343px;">rotating</span><span class="w" id="a727" style="left:505.10px;letter-spacing:-0.303px;">base</span><span class="w" id="a728" style="left:537.60px;letter-spacing:-0.300px;transform:scaleX(0.9720);transform-origin:0 50%;">to</span><span class="w" id="a729" style="left:552.80px;letter-spacing:0.509px;">allow</span><span class="w" id="a730" style="left:589.70px;letter-spacing:0.105px;">for</span><span class="w" id="a731" style="left:610.10px;letter-spacing:0.387px;">adjustment</span><span class="w" id="a732" style="left:682.90px;letter-spacing:-0.300px;transform:scaleX(0.9720);transform-origin:0 50%;">of</span><span class="w" id="a733" style="left:698.10px;letter-spacing:0.219px;">temperature</span><span class="w" id="a734" style="left:776.20px;letter-spacing:-0.300px;transform:scaleX(0.8873);transform-origin:0 50%;">by</span><span class="w" id="a735" style="left:793.10px;letter-spacing:0.295px;">turning</span><span class="w" id="a736" style="left:840.00px;letter-spacing:0.358px;">clockwise</span><span class="w" id="a737" style="left:904.10px;letter-spacing:0.194px;">(increase</span><span class="w" id="a738" style="left:965.10px;letter-spacing:-0.166px;">in</span><span class="w" id="a739" style="left:979.90px;letter-spacing:0.245px;">temp)</span><span class="w" id="a740" style="left:1019.30px;letter-spacing:0.342px;">and</span><span class="w" id="a741" style="left:1046.00px;letter-spacing:0.380px;">counter-clockwise</span><span class="w" id="a742" style="left:1162.00px;letter-spacing:-0.207px;">(decrease</span><span class="w" id="a743" style="left:1224.40px;letter-spacing:-0.366px;">in</span><span class="w" id="a744" style="left:1239.00px;letter-spacing:0.485px;">temp).</span></div>
<svg style="left:1680px;top:193px;" width="15" height="10" viewBox="0 0 15 10"><path d="M3.4 6.8 L7.6 2.7 L11.8 6.8" fill="none" stroke="#333" stroke-width="1.25" stroke-linecap="round" stroke-linejoin="round" /></svg>
<div style="left:1px;top:1105px;width:1704px;height:32px;background:linear-gradient(90deg,#e3e7ea 0%,#e5e7e9 35%,#e6e6e6 70%,#e6e6e6 100%);"></div>
<svg style="left:28px;top:1114px;" width="10" height="13" viewBox="0 0 10 13"><path d="M7 1.5 L2.5 6.5 L7 11.5" fill="none" stroke="#a6a6a6" stroke-width="1.3" stroke-linecap="round" stroke-linejoin="round" /></svg>
<svg style="left:60px;top:1114px;" width="10" height="13" viewBox="0 0 10 13"><path d="M3 1.5 L7.5 6.5 L3 11.5" fill="none" stroke="#a6a6a6" stroke-width="1.3" stroke-linecap="round" stroke-linejoin="round" /></svg>
<div class="t" id="t745" style="top:1113.19px;font-size:13.6px;line-height:18px;height:18px;color:#333;letter-spacing:0.018px;left:126px;">File Info</div>
<div style="left:192.5px;top:1105px;width:144px;height:28px;border-radius:0 0 6px 6px;background:#fff;"></div>
<div class="t" id="t746" style="top:1110.26px;font-size:13.4px;line-height:17px;height:17px;color:#1f1f1f;font-weight:700;letter-spacing:-0.250px;left:201px;">File Analysis Report</div>
<div style="left:201px;top:1127.6px;width:124px;height:2.2px;background:#107c41;border-radius:1px;"></div>
<div class="t" id="t747" style="top:1113.19px;font-size:13.6px;line-height:18px;height:18px;color:#333;letter-spacing:0.016px;left:353px;">Explanation of Flags</div>
<div class="t" id="t748" style="top:1113.19px;font-size:13.6px;line-height:18px;height:18px;color:#333;letter-spacing:0.147px;left:505px;">Invalid Requirements</div>
<div style="left:188.5px;top:1112px;width:1px;height:19px;background:#d0d0d0;"></div>
<div style="left:338px;top:1112px;width:1px;height:19px;background:#d0d0d0;"></div>
<div style="left:490.5px;top:1112px;width:1px;height:19px;background:#d0d0d0;"></div>
<div style="left:650px;top:1112px;width:1px;height:19px;background:#d0d0d0;"></div>
<svg style="left:690.5px;top:1113.7px;" width="14" height="14" viewBox="0 0 14 14"><path d="M7 1.5 V12.5 M1.5 7 H12.5" fill="none" stroke="#222" stroke-width="1" stroke-linecap="round" stroke-linejoin="round" /></svg>
<div style="left:1024.4px;top:1116.3px;width:2.2px;height:2.2px;border-radius:0.6px;background:#333;"></div>
<div style="left:1024.4px;top:1120.8px;width:2.2px;height:2.2px;border-radius:0.6px;background:#333;"></div>
<div style="left:1024.4px;top:1125.3px;width:2.2px;height:2.2px;border-radius:0.6px;background:#333;"></div>
<div style="left:1042px;top:1112.2px;width:644px;height:17px;border-radius:8.5px;background:#f5f5f5;"></div>
<svg style="left:1046px;top:1115px;" width="9" height="11" viewBox="0 0 9 11"><path d="M7.8 1 L1.2 5.4 L7.8 9.8 Z" fill="#6a6a6a"/></svg>
<svg style="left:1672.5px;top:1115px;" width="9" height="11" viewBox="0 0 9 11"><path d="M1.2 1 L7.8 5.4 L1.2 9.8 Z" fill="#6a6a6a"/></svg>
<div style="left:1059px;top:1116px;width:317px;height:9px;border-radius:4.5px;background:#6f6f6f;"></div>
<div style="left:1683px;top:240px;width:22px;height:865px;background:#e8ebee;"></div>
<div style="left:1685.5px;top:240px;width:18px;height:866px;border-radius:9px;background:#f3f3f3;"></div>
<svg style="left:1689px;top:243px;" width="10" height="9" viewBox="0 0 10 9"><path d="M1 7.5 L5 2 L9 7.5 Z" fill="#6a6a6a"/></svg>
<svg style="left:1689px;top:1094px;" width="10" height="9" viewBox="0 0 10 9"><path d="M1 1.5 L5 7 L9 1.5 Z" fill="#6a6a6a"/></svg>
<div style="left:1690px;top:257px;width:9px;height:533px;border-radius:4.5px;background:#6f6f6f;"></div>
<div style="left:1px;top:1137px;width:1704px;height:21px;background:#f3f3f3;"></div>
<div style="left:1px;top:1137px;width:1704px;height:1px;background:#dcdcdc;"></div>
<div class="t" id="t749" style="top:1141.08px;font-size:11.6px;line-height:15px;height:15px;color:#333;letter-spacing:-0.300px;transform:scaleX(0.9593);transform-origin:0 50%;left:12.5px;">Ready</div>
<svg style="left:62px;top:1141px;" width="15" height="15" viewBox="0 0 15 15"><circle cx="7" cy="2.6" r="1.5" fill="none" stroke="#333" stroke-width="1"/><path d="M1.5 5.5 C5 6.8 9 6.8 12.5 5.5 M5.2 6.5 V9 L3 13.5 M8.8 6.5 V9 L11 13.5 M5.2 9 H8.8" fill="none" stroke="#333" stroke-width="1" stroke-linecap="round" stroke-linejoin="round" /><path d="M9 9.5 L13.5 14 M13.5 9.5 L9 14" fill="none" stroke="#333" stroke-width="1" stroke-linecap="round" stroke-linejoin="round" /></svg>
<div class="t" id="t750" style="top:1141.15px;font-size:11.4px;line-height:15px;height:15px;color:#222;font-weight:700;letter-spacing:-0.444px;left:81.5px;">Accessibility: Investigate</div>
<div style="left:1394.5px;top:1138px;width:38.5px;height:20px;background:#dadada;"></div>
<svg style="left:1407px;top:1141px;" width="14" height="14" viewBox="0 0 14 14"><path d="M0.8 0.8 H12.8 V12.8 H0.8 Z M0.8 4.8 H12.8 M0.8 8.8 H12.8 M4.8 0.8 V12.8 M8.8 0.8 V12.8" fill="none" stroke="#333" stroke-width="1.1" stroke-linecap="round" stroke-linejoin="round" /></svg>
<svg style="left:1447px;top:1141px;" width="14" height="14" viewBox="0 0 14 14"><path d="M0.8 0.8 H12.8 V12.8 H0.8 Z" fill="none" stroke="#333" stroke-width="1.1" stroke-linecap="round" stroke-linejoin="round" /><path d="M3.3 3.3 H10.3 V10.3 H3.3 Z M5 5.6 H8.6 M5 8 H8.6" fill="none" stroke="#333" stroke-width="1" stroke-linecap="round" stroke-linejoin="round" /></svg>
<svg style="left:1487px;top:1141px;" width="15" height="14" viewBox="0 0 15 14"><path d="M0.8 0.8 H13.8 V12.8 H0.8 Z" fill="none" stroke="#333" stroke-width="1.1" stroke-linecap="round" stroke-linejoin="round" /><path d="M4.8 0.8 V8 H0.8 M9.8 0.8 V8 H13.8" fill="none" stroke="#333" stroke-width="1" stroke-linecap="round" stroke-linejoin="round" /></svg>
<div style="left:1520px;top:1147.5px;width:8px;height:1px;background:#444;"></div>
<div style="left:1533px;top:1147.5px;width:99px;height:1px;background:#8a8a8a;"></div>
<div style="left:1581.5px;top:1142.5px;width:4.4px;height:11.5px;background:#666;"></div>
<div style="left:1638px;top:1147.5px;width:8px;height:1px;background:#444;"></div>
<div style="left:1641.5px;top:1144px;width:1px;height:8px;background:#444;"></div>
<div class="t" id="t751" style="top:1141.08px;font-size:11.6px;line-height:15px;height:15px;color:#333;letter-spacing:-0.300px;transform:scaleX(0.9215);transform-origin:0 50%;left:1659px;">100%</div>
<div style="left:0px;top:49px;width:1px;height:1111px;background:#107c41;"></div>
<div style="left:1705px;top:49px;width:1px;height:1111px;background:#107c41;"></div>
<div style="left:0px;top:1158.7px;width:1706px;height:1.3px;background:#107c41;"></div>
<svg style="left:0px;top:0px;" width="6" height="6" viewBox="0 0 6 6"><path d="M0 0 H5 A5 5 0 0 0 0 5 Z" fill="#2a2320"/></svg>
<svg style="left:1700px;top:0px;" width="6" height="6" viewBox="0 0 6 6"><path d="M6 0 H1 A5 5 0 0 1 6 5 Z" fill="#2a2320"/></svg>
<svg style="left:0px;top:1155px;" width="5" height="5" viewBox="0 0 5 5"><path d="M0 5 H5 A5 5 0 0 1 0 0 Z" fill="#2a2320"/><path d="M0.6 0 A4.4 4.4 0 0 0 5 4.4" fill="none" stroke="#107c41" stroke-width="1.3"/></svg>
<svg style="left:1701px;top:1155px;" width="5" height="5" viewBox="0 0 5 5"><path d="M5 5 H0 A5 5 0 0 0 5 0 Z" fill="#2a2320"/><path d="M4.4 0 A4.4 4.4 0 0 1 0 4.4" fill="none" stroke="#107c41" stroke-width="1.3"/></svg>
</body></html>
